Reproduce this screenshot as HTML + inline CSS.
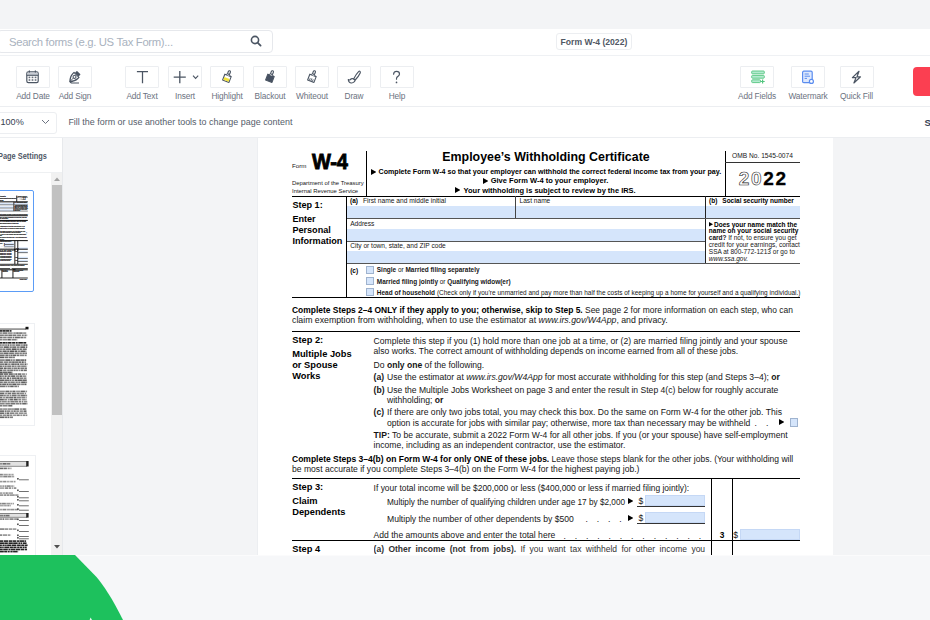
<!DOCTYPE html>
<html><head><meta charset="utf-8"><style>
html,body{margin:0;padding:0;width:930px;height:620px;overflow:hidden;background:#f3f4f6}
body{position:relative;font-family:"Liberation Sans",sans-serif}
.t{position:absolute;white-space:nowrap;line-height:1}
.r{position:absolute}
.thumb .t{-webkit-text-stroke:1.2px #333}
</style></head><body>
<div class="r" style="left:0px;top:0px;width:930px;height:29px;background:#f3f4f6"></div>
<div class="r" style="left:0px;top:29px;width:930px;height:109px;background:#fff"></div>
<div class="r" style="left:-3px;top:29.5px;width:276px;height:23px;border:1px solid #e6e8ec;border-radius:4px;box-sizing:border-box;background:#fff"></div>
<div class="t" style="left:9px;top:36.89px;font-size:11.3px;font-weight:400;color:#a9b2be;letter-spacing:-0.33px">Search forms (e.g. US Tax Form)...</div>
<svg class="r" style="left:250px;top:35px" width="12" height="12" viewBox="0 0 12 12"><circle cx="5" cy="5" r="3.6" fill="none" stroke="#4b5563" stroke-width="1.6"/><path d="M7.6 7.6L10.6 10.6" stroke="#4b5563" stroke-width="1.8" stroke-linecap="round"/></svg>
<div class="r" style="left:555.5px;top:32.5px;width:76px;height:17px;border:1px solid #eceef1;border-radius:3px;box-sizing:border-box"></div>
<div class="t" style="left:560.6px;top:37.76px;font-size:8.6px;font-weight:700;color:#505764;">Form W-4 (2022)</div>
<div class="r" style="left:0px;top:54.8px;width:930px;height:1.0px;background:#eff1f4"></div>
<div class="r" style="left:16px;top:65.5px;width:34px;height:22px;border:1px solid #eceef1;border-radius:1px;box-sizing:border-box"></div>
<svg class="r" style="left:16px;top:65.5px" width="34" height="22" viewBox="0 0 34 22"><rect x="10.8" y="5.9" width="11.4" height="10.8" rx="1.6" fill="#fff" stroke="#4b5563" stroke-width="1.2"/><rect x="11.4" y="6.5" width="10.2" height="2.6" fill="#c9cdd5"/><path d="M10.8 9.3H22.2" stroke="#4b5563" stroke-width="1.1"/><path d="M13.4 4.6V6.6M19.4 4.6V6.6" stroke="#4b5563" stroke-width="1.2"/><g fill="#4b5563" fill-opacity="0.85"><rect x="12.6" y="10.6" width="1.7" height="1.6"/><rect x="15.65" y="10.6" width="1.7" height="1.6"/><rect x="18.7" y="10.6" width="1.7" height="1.6"/><rect x="12.6" y="13.2" width="1.7" height="1.6"/><rect x="15.65" y="13.2" width="1.7" height="1.6"/><rect x="18.7" y="13.2" width="1.7" height="1.6"/></g></svg>
<div class="t" style="left:33px;top:92.10px;font-size:8.3px;font-weight:400;color:#6b7280;transform:translateX(-50%);letter-spacing:-0.12px">Add Date</div>
<div class="r" style="left:58px;top:65.5px;width:34px;height:22px;border:1px solid #eceef1;border-radius:1px;box-sizing:border-box"></div>
<svg class="r" style="left:58px;top:65.5px" width="34" height="22" viewBox="0 0 34 22"><g transform="rotate(45 16.8 10.6)"><path d="M13.3 8.2H20.3V10.2C20.3 13 18.6 15.6 16.8 17.6C15 15.6 13.3 13 13.3 10.2Z" fill="#fff" stroke="#4b5563" stroke-width="1.2" stroke-linejoin="round"/><rect x="14.2" y="5" width="5.2" height="2.8" rx="0.6" fill="#4b5563"/><circle cx="16.8" cy="11" r="1.5" fill="none" stroke="#4b5563" stroke-width="1"/><path d="M16.8 12.5V17" stroke="#4b5563" stroke-width="0.9"/></g><path d="M12.2 15.2C12.2 16.6 13 17 14.5 17H21" fill="none" stroke="#4b5563" stroke-width="1.2"/></svg>
<div class="t" style="left:75px;top:92.10px;font-size:8.3px;font-weight:400;color:#6b7280;transform:translateX(-50%);letter-spacing:-0.12px">Add Sign</div>
<div class="r" style="left:125px;top:65.5px;width:34px;height:22px;border:1px solid #eceef1;border-radius:1px;box-sizing:border-box"></div>
<svg class="r" style="left:125px;top:65.5px" width="34" height="22" viewBox="0 0 34 22"><path d="M11.9 5.6H23M17.5 5.6V17.2" stroke="#4b5563" stroke-width="1.25" fill="none"/></svg>
<div class="t" style="left:142px;top:92.10px;font-size:8.3px;font-weight:400;color:#6b7280;transform:translateX(-50%);letter-spacing:-0.12px">Add Text</div>
<div class="r" style="left:168px;top:65.5px;width:34px;height:22px;border:1px solid #eceef1;border-radius:1px;box-sizing:border-box"></div>
<svg class="r" style="left:168px;top:65.5px" width="34" height="22" viewBox="0 0 34 22"><path d="M5.7 11.1H17.8M11.8 5.1V17.2" stroke="#4b5563" stroke-width="1.3" fill="none"/><path d="M25 9.7L27.6 12.4L30.2 9.7" stroke="#4b5563" stroke-width="1.1" fill="none"/></svg>
<div class="t" style="left:185px;top:92.10px;font-size:8.3px;font-weight:400;color:#6b7280;transform:translateX(-50%);letter-spacing:-0.12px">Insert</div>
<div class="r" style="left:210px;top:65.5px;width:34px;height:22px;border:1px solid #eceef1;border-radius:1px;box-sizing:border-box"></div>
<svg class="r" style="left:210px;top:65.5px" width="34" height="22" viewBox="0 0 34 22"><g transform="rotate(21 17 12)"><path d="M13.6 9.2H20.4V15.4H13.6Z" fill="#fff" stroke="#4b5563" stroke-width="1.1" stroke-linejoin="round"/><rect x="14.2" y="12.0" width="5.6" height="2.9" fill="#f2e33b"/><path d="M15 9.2L16 7.6H18L19 9.2" fill="#fff" stroke="#4b5563" stroke-width="1" stroke-linejoin="round"/><rect x="15.9" y="4.3" width="2.2" height="3.6" rx="1.1" fill="#fff" stroke="#4b5563" stroke-width="1.1"/></g></svg>
<div class="t" style="left:227px;top:92.10px;font-size:8.3px;font-weight:400;color:#6b7280;transform:translateX(-50%);letter-spacing:-0.12px">Highlight</div>
<div class="r" style="left:253px;top:65.5px;width:34px;height:22px;border:1px solid #eceef1;border-radius:1px;box-sizing:border-box"></div>
<svg class="r" style="left:253px;top:65.5px" width="34" height="22" viewBox="0 0 34 22"><g transform="rotate(21 17 12)"><path d="M13.6 9.2H20.4V15.4H13.6Z" fill="#465162" stroke="#4b5563" stroke-width="1.1" stroke-linejoin="round"/><path d="M15 9.2L16 7.6H18L19 9.2" fill="#fff" stroke="#4b5563" stroke-width="1" stroke-linejoin="round"/><rect x="15.9" y="4.3" width="2.2" height="3.6" rx="1.1" fill="#fff" stroke="#4b5563" stroke-width="1.1"/></g></svg>
<div class="t" style="left:270px;top:92.10px;font-size:8.3px;font-weight:400;color:#6b7280;transform:translateX(-50%);letter-spacing:-0.12px">Blackout</div>
<div class="r" style="left:295px;top:65.5px;width:34px;height:22px;border:1px solid #eceef1;border-radius:1px;box-sizing:border-box"></div>
<svg class="r" style="left:295px;top:65.5px" width="34" height="22" viewBox="0 0 34 22"><g transform="rotate(21 17 12)"><path d="M13.6 9.2H20.4V15.4H13.6Z" fill="#fff" stroke="#4b5563" stroke-width="1.1" stroke-linejoin="round"/><path d="M15.4 12.8V15.2M17 12.4V15.2M18.6 12.8V15.2" stroke="#4b5563" stroke-width="0.8"/><path d="M15 9.2L16 7.6H18L19 9.2" fill="#fff" stroke="#4b5563" stroke-width="1" stroke-linejoin="round"/><rect x="15.9" y="4.3" width="2.2" height="3.6" rx="1.1" fill="#fff" stroke="#4b5563" stroke-width="1.1"/></g></svg>
<div class="t" style="left:312px;top:92.10px;font-size:8.3px;font-weight:400;color:#6b7280;transform:translateX(-50%);letter-spacing:-0.12px">Whiteout</div>
<div class="r" style="left:337px;top:65.5px;width:34px;height:22px;border:1px solid #eceef1;border-radius:1px;box-sizing:border-box"></div>
<svg class="r" style="left:337px;top:65.5px" width="34" height="22" viewBox="0 0 34 22"><path d="M16.6 12.9C18 10.2 20.4 6.8 21.6 5.6C22.6 4.7 23.8 5.5 23.2 6.9C22.3 9 19.8 12.2 18.2 14Z" fill="none" stroke="#4b5563" stroke-width="1.15" stroke-linejoin="round"/><path d="M16.4 12.7C14.8 12.3 13.5 13.2 13 13.8C12.6 14.2 11.8 13.9 11.3 13.6C11.4 15.6 12.8 17.2 14.6 17C16.6 16.8 18.2 15.2 18 14Z" fill="none" stroke="#4b5563" stroke-width="1.15" stroke-linejoin="round"/></svg>
<div class="t" style="left:354px;top:92.10px;font-size:8.3px;font-weight:400;color:#6b7280;transform:translateX(-50%);letter-spacing:-0.12px">Draw</div>
<div class="r" style="left:380px;top:65.5px;width:34px;height:22px;border:1px solid #eceef1;border-radius:1px;box-sizing:border-box"></div>
<svg class="r" style="left:380px;top:65.5px" width="34" height="22" viewBox="0 0 34 22"><path d="M13.6 8.2C13.6 6.3 15 5.3 16.5 5.3C18.2 5.3 19.5 6.4 19.5 8C19.5 9.8 17.7 10.4 16.8 11.5C16.5 11.9 16.5 12.4 16.5 13.2" fill="none" stroke="#4b5563" stroke-width="1.2" stroke-linecap="round"/><circle cx="16.5" cy="16.4" r="0.85" fill="#4b5563"/></svg>
<div class="t" style="left:397px;top:92.10px;font-size:8.3px;font-weight:400;color:#6b7280;transform:translateX(-50%);letter-spacing:-0.12px">Help</div>
<div class="r" style="left:740px;top:65.5px;width:34px;height:22px;border:1px solid #eceef1;border-radius:1px;box-sizing:border-box"></div>
<svg class="r" style="left:740px;top:65.5px" width="34" height="22" viewBox="0 0 34 22"><g fill="#b4ead0" stroke="#52c57f" stroke-width="0.9"><rect x="11.7" y="5" width="12.6" height="2.8" rx="0.8"/><rect x="11.7" y="9.4" width="12.6" height="2.8" rx="0.8"/><rect x="11.7" y="13.8" width="8.8" height="2.8" rx="0.8"/></g><path d="M22.6 13.4V17.6M20.5 15.5H24.7" stroke="#52c57f" stroke-width="1.2"/></svg>
<div class="t" style="left:757px;top:92.10px;font-size:8.3px;font-weight:400;color:#6b7280;transform:translateX(-50%);letter-spacing:-0.12px">Add Fields</div>
<div class="r" style="left:791px;top:65.5px;width:34px;height:22px;border:1px solid #eceef1;border-radius:1px;box-sizing:border-box"></div>
<svg class="r" style="left:791px;top:65.5px" width="34" height="22" viewBox="0 0 34 22"><rect x="11.6" y="5.2" width="9.6" height="11.4" rx="1.2" fill="#dfe9fd" stroke="#5b8def" stroke-width="1.2"/><path d="M13.6 8H17.8M13.6 10.2H19M13.6 12.4H16" stroke="#5b8def" stroke-width="1"/><circle cx="20.4" cy="15.4" r="2" fill="#fff" stroke="#5b8def" stroke-width="1.2"/></svg>
<div class="t" style="left:808px;top:92.10px;font-size:8.3px;font-weight:400;color:#6b7280;transform:translateX(-50%);letter-spacing:-0.12px">Watermark</div>
<div class="r" style="left:839.5px;top:65.5px;width:34px;height:22px;border:1px solid #eceef1;border-radius:1px;box-sizing:border-box"></div>
<svg class="r" style="left:839.5px;top:65.5px" width="34" height="22" viewBox="0 0 34 22"><path d="M19 5.3L12.4 11.6H16L13.9 17L20.5 10.8H17Z" fill="none" stroke="#4b5563" stroke-width="1.2" stroke-linejoin="round"/></svg>
<div class="t" style="left:856.5px;top:92.10px;font-size:8.3px;font-weight:400;color:#6b7280;transform:translateX(-50%);letter-spacing:-0.12px">Quick Fill</div>
<div class="r" style="left:913px;top:67px;width:30px;height:28.5px;background:#fb3f51;border-radius:4px"></div>
<div class="r" style="left:0px;top:106.0px;width:930px;height:1.0px;background:#eceef1"></div>
<div class="r" style="left:-4px;top:112px;width:61px;height:21.5px;border:1px solid #eceef1;border-radius:3px;box-sizing:border-box"></div>
<div class="t" style="left:0.5px;top:118.22px;font-size:9.1px;font-weight:400;color:#374151;">100%</div>
<svg class="r" style="left:41px;top:119px" width="9" height="6" viewBox="0 0 9 6"><path d="M1 1L4.5 4.5L8 1" fill="none" stroke="#6b7280" stroke-width="1"/></svg>
<div class="t" style="left:68.4px;top:118.29px;font-size:8.95px;font-weight:400;color:#555d6a;">Fill the form or use another tools to change page content</div>
<div class="t" style="left:924.5px;top:117.83px;font-size:9.5px;font-weight:700;color:#374151;">S</div>
<div class="r" style="left:0px;top:137.1px;width:930px;height:1.0px;background:#eceef1"></div>
<div class="r" style="left:0px;top:138px;width:930px;height:417px;background:#f3f4f6"></div>
<div class="r" style="left:0px;top:138px;width:62px;height:417px;background:#fff"></div>
<div class="r" style="left:61.8px;top:138px;width:1.0px;height:417px;background:#e7e9ec"></div>
<div class="t" style="left:-2px;top:152.06px;font-size:8.6px;font-weight:700;color:#4f5866;transform:scaleX(0.86);transform-origin:0 0">Page Settings</div>
<div class="r" style="left:0px;top:171.8px;width:62px;height:1.0px;background:#eef0f2"></div>
<div class="r" style="left:50.5px;top:172.8px;width:11.5px;height:382px;background:#f1f1f1"></div>
<div class="r" style="left:52px;top:184.5px;width:9.5px;height:230px;background:#c1c1c1"></div>
<svg class="r" style="left:53.5px;top:176.5px" width="6" height="4" viewBox="0 0 6 4"><path d="M0 4L3 0.5L6 4Z" fill="#a3a3a3"/></svg>
<svg class="r" style="left:53.5px;top:545px" width="6" height="4" viewBox="0 0 6 4"><path d="M0 0L3 3.5L6 0Z" fill="#505050"/></svg>
<div class="r" style="left:-10px;top:322.5px;width:44.5px;height:103px;border:1px solid #eef0f3;box-sizing:border-box;background:#fff"></div>
<div class="r" style="left:-10px;top:455px;width:45.5px;height:110px;border:1px solid #eef0f3;box-sizing:border-box;background:#fff"></div>
<svg class="r" style="left:0;top:0" width="34" height="430" viewBox="0 0 34 430"><rect x="0" y="328.6" width="26" height="0.9" fill="#333"/><rect x="25.5" y="326.8" width="3" height="2.6" fill="#111"/><rect x="0.00" y="330.10" width="2.03" height="1.6" fill="#222" fill-opacity="1.00"/><rect x="2.36" y="330.10" width="3.38" height="1.6" fill="#222" fill-opacity="1.00"/><rect x="6.06" y="330.10" width="3.28" height="1.6" fill="#222" fill-opacity="0.98"/><rect x="9.81" y="330.10" width="1.71" height="1.6" fill="#222" fill-opacity="1.00"/><rect x="0.00" y="332.30" width="1.93" height="1.6" fill="#222" fill-opacity="0.54"/><rect x="2.48" y="332.30" width="4.82" height="1.6" fill="#222" fill-opacity="0.62"/><rect x="7.76" y="332.30" width="4.92" height="1.6" fill="#222" fill-opacity="0.51"/><rect x="13.32" y="332.30" width="2.51" height="1.6" fill="#222" fill-opacity="0.53"/><rect x="16.18" y="332.30" width="2.58" height="1.6" fill="#222" fill-opacity="0.67"/><rect x="19.13" y="332.30" width="3.54" height="1.6" fill="#222" fill-opacity="0.63"/><rect x="23.12" y="332.30" width="3.14" height="1.6" fill="#222" fill-opacity="0.51"/><rect x="0.00" y="334.50" width="3.88" height="1.6" fill="#222" fill-opacity="0.59"/><rect x="4.31" y="334.50" width="3.55" height="1.6" fill="#222" fill-opacity="0.59"/><rect x="8.28" y="334.50" width="4.28" height="1.6" fill="#222" fill-opacity="0.65"/><rect x="12.95" y="334.50" width="3.51" height="1.6" fill="#222" fill-opacity="0.61"/><rect x="17.11" y="334.50" width="4.05" height="1.6" fill="#222" fill-opacity="0.56"/><rect x="21.86" y="334.50" width="1.91" height="1.6" fill="#222" fill-opacity="0.59"/><rect x="24.38" y="334.50" width="2.03" height="1.6" fill="#222" fill-opacity="0.60"/><rect x="26.72" y="334.50" width="0.47" height="1.6" fill="#222" fill-opacity="0.66"/><rect x="0.00" y="336.70" width="2.60" height="1.6" fill="#222" fill-opacity="0.65"/><rect x="3.14" y="336.70" width="3.53" height="1.6" fill="#222" fill-opacity="0.59"/><rect x="7.30" y="336.70" width="4.81" height="1.6" fill="#222" fill-opacity="0.60"/><rect x="12.67" y="336.70" width="1.71" height="1.6" fill="#222" fill-opacity="0.65"/><rect x="14.94" y="336.70" width="4.98" height="1.6" fill="#222" fill-opacity="0.67"/><rect x="20.33" y="336.70" width="2.85" height="1.6" fill="#222" fill-opacity="0.64"/><rect x="23.49" y="336.70" width="2.69" height="1.6" fill="#222" fill-opacity="0.53"/><rect x="0.00" y="338.90" width="1.95" height="1.6" fill="#222" fill-opacity="0.55"/><rect x="2.41" y="338.90" width="4.55" height="1.6" fill="#222" fill-opacity="0.51"/><rect x="7.44" y="338.90" width="3.42" height="1.6" fill="#222" fill-opacity="0.69"/><rect x="11.49" y="338.90" width="4.52" height="1.6" fill="#222" fill-opacity="0.56"/><rect x="16.48" y="338.90" width="0.74" height="1.6" fill="#222" fill-opacity="0.69"/><rect x="0.00" y="342.00" width="2.12" height="1.6" fill="#222" fill-opacity="1.00"/><rect x="2.51" y="342.00" width="3.20" height="1.6" fill="#222" fill-opacity="1.00"/><rect x="6.11" y="342.00" width="1.51" height="1.6" fill="#222" fill-opacity="1.00"/><rect x="8.07" y="342.00" width="3.48" height="1.6" fill="#222" fill-opacity="1.00"/><rect x="12.13" y="342.00" width="3.30" height="1.6" fill="#222" fill-opacity="1.00"/><rect x="16.01" y="342.00" width="1.69" height="1.6" fill="#222" fill-opacity="1.00"/><rect x="18.31" y="342.00" width="4.56" height="1.6" fill="#222" fill-opacity="1.00"/><rect x="23.33" y="342.00" width="2.90" height="1.6" fill="#222" fill-opacity="1.00"/><rect x="0.00" y="344.30" width="1.74" height="1.6" fill="#222" fill-opacity="0.58"/><rect x="2.10" y="344.30" width="2.69" height="1.6" fill="#222" fill-opacity="0.54"/><rect x="5.09" y="344.30" width="2.03" height="1.6" fill="#222" fill-opacity="0.55"/><rect x="7.57" y="344.30" width="1.59" height="1.6" fill="#222" fill-opacity="0.73"/><rect x="9.70" y="344.30" width="2.02" height="1.6" fill="#222" fill-opacity="0.59"/><rect x="12.16" y="344.30" width="2.77" height="1.6" fill="#222" fill-opacity="0.56"/><rect x="15.57" y="344.30" width="4.98" height="1.6" fill="#222" fill-opacity="0.64"/><rect x="21.04" y="344.30" width="1.80" height="1.6" fill="#222" fill-opacity="0.55"/><rect x="23.28" y="344.30" width="2.43" height="1.6" fill="#222" fill-opacity="0.72"/><rect x="26.07" y="344.30" width="1.33" height="1.6" fill="#222" fill-opacity="0.75"/><rect x="0.00" y="346.35" width="3.40" height="1.6" fill="#222" fill-opacity="0.53"/><rect x="3.91" y="346.35" width="4.92" height="1.6" fill="#222" fill-opacity="0.73"/><rect x="9.42" y="346.35" width="2.41" height="1.6" fill="#222" fill-opacity="0.61"/><rect x="12.20" y="346.35" width="4.20" height="1.6" fill="#222" fill-opacity="0.65"/><rect x="17.01" y="346.35" width="2.65" height="1.6" fill="#222" fill-opacity="0.58"/><rect x="20.29" y="346.35" width="4.95" height="1.6" fill="#222" fill-opacity="0.72"/><rect x="25.86" y="346.35" width="1.42" height="1.6" fill="#222" fill-opacity="0.70"/><rect x="0.00" y="348.40" width="2.74" height="1.6" fill="#222" fill-opacity="0.53"/><rect x="3.06" y="348.40" width="2.48" height="1.6" fill="#222" fill-opacity="0.59"/><rect x="6.11" y="348.40" width="4.85" height="1.6" fill="#222" fill-opacity="0.63"/><rect x="11.63" y="348.40" width="4.96" height="1.6" fill="#222" fill-opacity="0.75"/><rect x="17.04" y="348.40" width="2.27" height="1.6" fill="#222" fill-opacity="0.58"/><rect x="19.69" y="348.40" width="2.22" height="1.6" fill="#222" fill-opacity="0.67"/><rect x="22.56" y="348.40" width="4.16" height="1.6" fill="#222" fill-opacity="0.64"/><rect x="0.00" y="350.45" width="1.80" height="1.6" fill="#222" fill-opacity="0.68"/><rect x="2.46" y="350.45" width="4.24" height="1.6" fill="#222" fill-opacity="0.70"/><rect x="7.19" y="350.45" width="2.12" height="1.6" fill="#222" fill-opacity="0.71"/><rect x="9.75" y="350.45" width="4.30" height="1.6" fill="#222" fill-opacity="0.75"/><rect x="14.51" y="350.45" width="2.90" height="1.6" fill="#222" fill-opacity="0.75"/><rect x="18.00" y="350.45" width="2.10" height="1.6" fill="#222" fill-opacity="0.56"/><rect x="20.46" y="350.45" width="4.67" height="1.6" fill="#222" fill-opacity="0.71"/><rect x="25.48" y="350.45" width="0.82" height="1.6" fill="#222" fill-opacity="0.75"/><rect x="0.00" y="352.50" width="3.42" height="1.6" fill="#222" fill-opacity="0.56"/><rect x="3.73" y="352.50" width="4.90" height="1.6" fill="#222" fill-opacity="0.68"/><rect x="9.13" y="352.50" width="4.77" height="1.6" fill="#222" fill-opacity="0.63"/><rect x="14.55" y="352.50" width="4.39" height="1.6" fill="#222" fill-opacity="0.58"/><rect x="19.34" y="352.50" width="2.53" height="1.6" fill="#222" fill-opacity="0.58"/><rect x="22.40" y="352.50" width="2.41" height="1.6" fill="#222" fill-opacity="0.62"/><rect x="25.16" y="352.50" width="1.81" height="1.6" fill="#222" fill-opacity="0.61"/><rect x="0.00" y="354.55" width="4.67" height="1.6" fill="#222" fill-opacity="0.63"/><rect x="5.33" y="354.55" width="3.26" height="1.6" fill="#222" fill-opacity="0.65"/><rect x="9.10" y="354.55" width="1.57" height="1.6" fill="#222" fill-opacity="0.63"/><rect x="11.04" y="354.55" width="1.51" height="1.6" fill="#222" fill-opacity="0.71"/><rect x="12.92" y="354.55" width="3.16" height="1.6" fill="#222" fill-opacity="0.70"/><rect x="16.60" y="354.55" width="2.64" height="1.6" fill="#222" fill-opacity="0.65"/><rect x="19.76" y="354.55" width="4.24" height="1.6" fill="#222" fill-opacity="0.55"/><rect x="24.53" y="354.55" width="2.09" height="1.6" fill="#222" fill-opacity="0.59"/><rect x="0.00" y="356.60" width="4.16" height="1.6" fill="#222" fill-opacity="0.74"/><rect x="4.64" y="356.60" width="3.64" height="1.6" fill="#222" fill-opacity="0.64"/><rect x="8.79" y="356.60" width="3.92" height="1.6" fill="#222" fill-opacity="0.63"/><rect x="13.22" y="356.60" width="1.52" height="1.6" fill="#222" fill-opacity="0.75"/><rect x="0.00" y="359.30" width="4.80" height="1.6" fill="#222" fill-opacity="0.59"/><rect x="5.32" y="359.30" width="4.80" height="1.6" fill="#222" fill-opacity="0.72"/><rect x="10.48" y="359.30" width="1.93" height="1.6" fill="#222" fill-opacity="0.63"/><rect x="12.73" y="359.30" width="2.34" height="1.6" fill="#222" fill-opacity="0.54"/><rect x="15.64" y="359.30" width="4.24" height="1.6" fill="#222" fill-opacity="0.74"/><rect x="20.25" y="359.30" width="4.01" height="1.6" fill="#222" fill-opacity="0.68"/><rect x="24.61" y="359.30" width="1.57" height="1.6" fill="#222" fill-opacity="0.75"/><rect x="0.00" y="361.35" width="2.89" height="1.6" fill="#222" fill-opacity="0.64"/><rect x="3.59" y="361.35" width="4.41" height="1.6" fill="#222" fill-opacity="0.57"/><rect x="8.48" y="361.35" width="3.30" height="1.6" fill="#222" fill-opacity="0.61"/><rect x="12.16" y="361.35" width="2.61" height="1.6" fill="#222" fill-opacity="0.69"/><rect x="15.08" y="361.35" width="3.44" height="1.6" fill="#222" fill-opacity="0.63"/><rect x="18.83" y="361.35" width="2.66" height="1.6" fill="#222" fill-opacity="0.67"/><rect x="21.99" y="361.35" width="1.73" height="1.6" fill="#222" fill-opacity="0.76"/><rect x="24.33" y="361.35" width="1.74" height="1.6" fill="#222" fill-opacity="0.55"/><rect x="0.00" y="363.40" width="4.23" height="1.6" fill="#222" fill-opacity="0.59"/><rect x="4.58" y="363.40" width="2.98" height="1.6" fill="#222" fill-opacity="0.74"/><rect x="8.18" y="363.40" width="2.41" height="1.6" fill="#222" fill-opacity="0.56"/><rect x="11.26" y="363.40" width="3.50" height="1.6" fill="#222" fill-opacity="0.69"/><rect x="15.09" y="363.40" width="1.70" height="1.6" fill="#222" fill-opacity="0.69"/><rect x="17.26" y="363.40" width="1.75" height="1.6" fill="#222" fill-opacity="0.74"/><rect x="19.57" y="363.40" width="4.31" height="1.6" fill="#222" fill-opacity="0.55"/><rect x="24.52" y="363.40" width="1.73" height="1.6" fill="#222" fill-opacity="0.73"/><rect x="26.73" y="363.40" width="0.71" height="1.6" fill="#222" fill-opacity="0.66"/><rect x="0.00" y="365.45" width="1.95" height="1.6" fill="#222" fill-opacity="0.65"/><rect x="2.35" y="365.45" width="1.88" height="1.6" fill="#222" fill-opacity="0.57"/><rect x="4.55" y="365.45" width="2.21" height="1.6" fill="#222" fill-opacity="0.60"/><rect x="7.18" y="365.45" width="4.16" height="1.6" fill="#222" fill-opacity="0.59"/><rect x="11.84" y="365.45" width="2.12" height="1.6" fill="#222" fill-opacity="0.61"/><rect x="14.27" y="365.45" width="2.38" height="1.6" fill="#222" fill-opacity="0.53"/><rect x="17.24" y="365.45" width="3.43" height="1.6" fill="#222" fill-opacity="0.57"/><rect x="21.16" y="365.45" width="4.77" height="1.6" fill="#222" fill-opacity="0.55"/><rect x="26.55" y="365.45" width="0.54" height="1.6" fill="#222" fill-opacity="0.64"/><rect x="0.00" y="367.50" width="3.27" height="1.6" fill="#222" fill-opacity="0.69"/><rect x="3.97" y="367.50" width="2.70" height="1.6" fill="#222" fill-opacity="0.72"/><rect x="7.25" y="367.50" width="3.73" height="1.6" fill="#222" fill-opacity="0.62"/><rect x="11.41" y="367.50" width="1.69" height="1.6" fill="#222" fill-opacity="0.56"/><rect x="13.43" y="367.50" width="4.09" height="1.6" fill="#222" fill-opacity="0.59"/><rect x="17.89" y="367.50" width="1.80" height="1.6" fill="#222" fill-opacity="0.72"/><rect x="20.33" y="367.50" width="3.85" height="1.6" fill="#222" fill-opacity="0.59"/><rect x="24.58" y="367.50" width="2.33" height="1.6" fill="#222" fill-opacity="0.63"/><rect x="0.00" y="369.55" width="2.42" height="1.6" fill="#222" fill-opacity="0.75"/><rect x="3.11" y="369.55" width="3.41" height="1.6" fill="#222" fill-opacity="0.58"/><rect x="7.21" y="369.55" width="2.58" height="1.6" fill="#222" fill-opacity="0.61"/><rect x="10.10" y="369.55" width="2.84" height="1.6" fill="#222" fill-opacity="0.64"/><rect x="13.43" y="369.55" width="2.20" height="1.6" fill="#222" fill-opacity="0.64"/><rect x="15.94" y="369.55" width="2.42" height="1.6" fill="#222" fill-opacity="0.55"/><rect x="18.82" y="369.55" width="1.65" height="1.6" fill="#222" fill-opacity="0.53"/><rect x="20.89" y="369.55" width="2.31" height="1.6" fill="#222" fill-opacity="0.66"/><rect x="23.72" y="369.55" width="3.12" height="1.6" fill="#222" fill-opacity="0.68"/><rect x="0.00" y="371.60" width="2.64" height="1.6" fill="#222" fill-opacity="0.76"/><rect x="3.00" y="371.60" width="4.03" height="1.6" fill="#222" fill-opacity="0.68"/><rect x="7.35" y="371.60" width="4.42" height="1.6" fill="#222" fill-opacity="0.73"/><rect x="12.33" y="371.60" width="0.35" height="1.6" fill="#222" fill-opacity="0.72"/><rect x="0.00" y="373.30" width="3.27" height="1.6" fill="#222" fill-opacity="0.72"/><rect x="3.89" y="373.30" width="4.39" height="1.6" fill="#222" fill-opacity="0.66"/><rect x="8.94" y="373.30" width="3.89" height="1.6" fill="#222" fill-opacity="0.69"/><rect x="13.22" y="373.30" width="1.61" height="1.6" fill="#222" fill-opacity="0.56"/><rect x="15.27" y="373.30" width="1.87" height="1.6" fill="#222" fill-opacity="0.72"/><rect x="17.66" y="373.30" width="3.70" height="1.6" fill="#222" fill-opacity="0.67"/><rect x="21.93" y="373.30" width="3.21" height="1.6" fill="#222" fill-opacity="0.53"/><rect x="25.76" y="373.30" width="0.95" height="1.6" fill="#222" fill-opacity="0.64"/><rect x="0.00" y="375.35" width="1.73" height="1.6" fill="#222" fill-opacity="0.70"/><rect x="2.13" y="375.35" width="1.76" height="1.6" fill="#222" fill-opacity="0.59"/><rect x="4.48" y="375.35" width="2.22" height="1.6" fill="#222" fill-opacity="0.70"/><rect x="7.39" y="375.35" width="3.23" height="1.6" fill="#222" fill-opacity="0.62"/><rect x="11.11" y="375.35" width="3.89" height="1.6" fill="#222" fill-opacity="0.71"/><rect x="15.55" y="375.35" width="3.75" height="1.6" fill="#222" fill-opacity="0.55"/><rect x="19.66" y="375.35" width="2.39" height="1.6" fill="#222" fill-opacity="0.70"/><rect x="22.47" y="375.35" width="3.49" height="1.6" fill="#222" fill-opacity="0.53"/><rect x="26.28" y="375.35" width="0.23" height="1.6" fill="#222" fill-opacity="0.68"/><rect x="0.00" y="377.40" width="2.52" height="1.6" fill="#222" fill-opacity="0.65"/><rect x="3.00" y="377.40" width="3.13" height="1.6" fill="#222" fill-opacity="0.56"/><rect x="6.79" y="377.40" width="2.20" height="1.6" fill="#222" fill-opacity="0.75"/><rect x="9.67" y="377.40" width="1.56" height="1.6" fill="#222" fill-opacity="0.63"/><rect x="11.85" y="377.40" width="4.89" height="1.6" fill="#222" fill-opacity="0.63"/><rect x="17.15" y="377.40" width="2.23" height="1.6" fill="#222" fill-opacity="0.75"/><rect x="19.77" y="377.40" width="3.54" height="1.6" fill="#222" fill-opacity="0.56"/><rect x="23.81" y="377.40" width="2.67" height="1.6" fill="#222" fill-opacity="0.56"/><rect x="0.00" y="379.45" width="4.60" height="1.6" fill="#222" fill-opacity="0.69"/><rect x="5.00" y="379.45" width="4.64" height="1.6" fill="#222" fill-opacity="0.64"/><rect x="9.95" y="379.45" width="1.51" height="1.6" fill="#222" fill-opacity="0.64"/><rect x="11.94" y="379.45" width="2.56" height="1.6" fill="#222" fill-opacity="0.56"/><rect x="14.94" y="379.45" width="2.61" height="1.6" fill="#222" fill-opacity="0.72"/><rect x="17.84" y="379.45" width="4.13" height="1.6" fill="#222" fill-opacity="0.72"/><rect x="22.32" y="379.45" width="4.42" height="1.6" fill="#222" fill-opacity="0.69"/><rect x="0.00" y="381.50" width="2.80" height="1.6" fill="#222" fill-opacity="0.62"/><rect x="3.50" y="381.50" width="3.56" height="1.6" fill="#222" fill-opacity="0.61"/><rect x="7.54" y="381.50" width="2.46" height="1.6" fill="#222" fill-opacity="0.54"/><rect x="10.34" y="381.50" width="4.42" height="1.6" fill="#222" fill-opacity="0.59"/><rect x="15.43" y="381.50" width="2.37" height="1.6" fill="#222" fill-opacity="0.59"/><rect x="18.31" y="381.50" width="2.16" height="1.6" fill="#222" fill-opacity="0.61"/><rect x="21.16" y="381.50" width="4.59" height="1.6" fill="#222" fill-opacity="0.72"/><rect x="26.31" y="381.50" width="0.76" height="1.6" fill="#222" fill-opacity="0.75"/><rect x="0.00" y="383.55" width="1.67" height="1.6" fill="#222" fill-opacity="0.70"/><rect x="2.15" y="383.55" width="4.13" height="1.6" fill="#222" fill-opacity="0.68"/><rect x="6.70" y="383.55" width="1.67" height="1.6" fill="#222" fill-opacity="0.74"/><rect x="8.72" y="383.55" width="3.15" height="1.6" fill="#222" fill-opacity="0.61"/><rect x="12.30" y="383.55" width="4.09" height="1.6" fill="#222" fill-opacity="0.75"/><rect x="16.79" y="383.55" width="3.80" height="1.6" fill="#222" fill-opacity="0.60"/><rect x="21.11" y="383.55" width="2.88" height="1.6" fill="#222" fill-opacity="0.57"/><rect x="24.35" y="383.55" width="2.07" height="1.6" fill="#222" fill-opacity="0.74"/><rect x="0.00" y="385.60" width="4.99" height="1.6" fill="#222" fill-opacity="0.63"/><rect x="5.34" y="385.60" width="2.17" height="1.6" fill="#222" fill-opacity="0.55"/><rect x="7.95" y="385.60" width="1.82" height="1.6" fill="#222" fill-opacity="0.58"/><rect x="10.18" y="385.60" width="3.49" height="1.6" fill="#222" fill-opacity="0.73"/><rect x="14.27" y="385.60" width="2.94" height="1.6" fill="#222" fill-opacity="0.62"/><rect x="17.72" y="385.60" width="1.15" height="1.6" fill="#222" fill-opacity="0.61"/><rect x="0.00" y="390.60" width="4.89" height="1.6" fill="#222" fill-opacity="0.52"/><rect x="5.39" y="390.60" width="3.70" height="1.6" fill="#222" fill-opacity="0.68"/><rect x="9.48" y="390.60" width="2.45" height="1.6" fill="#222" fill-opacity="0.55"/><rect x="12.39" y="390.60" width="3.06" height="1.6" fill="#222" fill-opacity="0.70"/><rect x="16.09" y="390.60" width="4.56" height="1.6" fill="#222" fill-opacity="0.50"/><rect x="20.95" y="390.60" width="3.98" height="1.6" fill="#222" fill-opacity="0.69"/><rect x="25.43" y="390.60" width="1.66" height="1.6" fill="#222" fill-opacity="0.50"/><rect x="0.00" y="392.65" width="4.39" height="1.6" fill="#222" fill-opacity="0.68"/><rect x="5.08" y="392.65" width="2.37" height="1.6" fill="#222" fill-opacity="0.52"/><rect x="7.81" y="392.65" width="3.33" height="1.6" fill="#222" fill-opacity="0.64"/><rect x="11.81" y="392.65" width="4.03" height="1.6" fill="#222" fill-opacity="0.64"/><rect x="16.45" y="392.65" width="3.10" height="1.6" fill="#222" fill-opacity="0.62"/><rect x="19.86" y="392.65" width="4.24" height="1.6" fill="#222" fill-opacity="0.55"/><rect x="24.77" y="392.65" width="1.34" height="1.6" fill="#222" fill-opacity="0.56"/><rect x="0.00" y="394.70" width="3.73" height="1.6" fill="#222" fill-opacity="0.65"/><rect x="4.07" y="394.70" width="1.75" height="1.6" fill="#222" fill-opacity="0.61"/><rect x="6.35" y="394.70" width="2.86" height="1.6" fill="#222" fill-opacity="0.54"/><rect x="9.75" y="394.70" width="1.54" height="1.6" fill="#222" fill-opacity="0.56"/><rect x="11.77" y="394.70" width="4.86" height="1.6" fill="#222" fill-opacity="0.64"/><rect x="17.28" y="394.70" width="3.16" height="1.6" fill="#222" fill-opacity="0.55"/><rect x="20.84" y="394.70" width="4.86" height="1.6" fill="#222" fill-opacity="0.65"/><rect x="26.13" y="394.70" width="0.99" height="1.6" fill="#222" fill-opacity="0.60"/><rect x="0.00" y="396.75" width="2.40" height="1.6" fill="#222" fill-opacity="0.64"/><rect x="3.07" y="396.75" width="2.29" height="1.6" fill="#222" fill-opacity="0.50"/><rect x="5.80" y="396.75" width="2.97" height="1.6" fill="#222" fill-opacity="0.64"/><rect x="9.15" y="396.75" width="4.29" height="1.6" fill="#222" fill-opacity="0.66"/><rect x="13.94" y="396.75" width="2.22" height="1.6" fill="#222" fill-opacity="0.71"/><rect x="16.59" y="396.75" width="4.37" height="1.6" fill="#222" fill-opacity="0.55"/><rect x="21.34" y="396.75" width="4.16" height="1.6" fill="#222" fill-opacity="0.56"/><rect x="26.19" y="396.75" width="0.68" height="1.6" fill="#222" fill-opacity="0.54"/><rect x="0.00" y="398.80" width="3.83" height="1.6" fill="#222" fill-opacity="0.70"/><rect x="4.19" y="398.80" width="2.88" height="1.6" fill="#222" fill-opacity="0.54"/><rect x="7.75" y="398.80" width="2.00" height="1.6" fill="#222" fill-opacity="0.51"/><rect x="10.07" y="398.80" width="2.88" height="1.6" fill="#222" fill-opacity="0.69"/><rect x="13.60" y="398.80" width="4.06" height="1.6" fill="#222" fill-opacity="0.71"/><rect x="18.34" y="398.80" width="2.65" height="1.6" fill="#222" fill-opacity="0.54"/><rect x="21.67" y="398.80" width="4.11" height="1.6" fill="#222" fill-opacity="0.50"/><rect x="26.35" y="398.80" width="0.53" height="1.6" fill="#222" fill-opacity="0.58"/><rect x="0.00" y="400.85" width="1.51" height="1.6" fill="#222" fill-opacity="0.56"/><rect x="1.95" y="400.85" width="4.84" height="1.6" fill="#222" fill-opacity="0.52"/><rect x="7.48" y="400.85" width="2.23" height="1.6" fill="#222" fill-opacity="0.57"/><rect x="10.34" y="400.85" width="4.38" height="1.6" fill="#222" fill-opacity="0.59"/><rect x="15.03" y="400.85" width="3.16" height="1.6" fill="#222" fill-opacity="0.58"/><rect x="18.86" y="400.85" width="2.18" height="1.6" fill="#222" fill-opacity="0.58"/><rect x="21.69" y="400.85" width="1.61" height="1.6" fill="#222" fill-opacity="0.59"/><rect x="23.92" y="400.85" width="3.32" height="1.6" fill="#222" fill-opacity="0.50"/><rect x="0.00" y="402.90" width="4.72" height="1.6" fill="#222" fill-opacity="0.55"/><rect x="5.32" y="402.90" width="4.64" height="1.6" fill="#222" fill-opacity="0.57"/><rect x="10.37" y="402.90" width="4.85" height="1.6" fill="#222" fill-opacity="0.63"/><rect x="15.63" y="402.90" width="4.01" height="1.6" fill="#222" fill-opacity="0.56"/><rect x="20.05" y="402.90" width="1.51" height="1.6" fill="#222" fill-opacity="0.66"/><rect x="22.23" y="402.90" width="3.72" height="1.6" fill="#222" fill-opacity="0.70"/><rect x="26.26" y="402.90" width="1.15" height="1.6" fill="#222" fill-opacity="0.60"/><rect x="0.00" y="404.95" width="2.38" height="1.6" fill="#222" fill-opacity="0.59"/><rect x="2.88" y="404.95" width="4.75" height="1.6" fill="#222" fill-opacity="0.54"/><rect x="8.25" y="404.95" width="4.08" height="1.6" fill="#222" fill-opacity="0.67"/><rect x="0.00" y="408.30" width="2.65" height="1.6" fill="#222" fill-opacity="0.55"/><rect x="3.09" y="408.30" width="4.24" height="1.6" fill="#222" fill-opacity="0.50"/><rect x="7.71" y="408.30" width="4.14" height="1.6" fill="#222" fill-opacity="0.53"/><rect x="12.17" y="408.30" width="1.62" height="1.6" fill="#222" fill-opacity="0.60"/><rect x="14.22" y="408.30" width="4.93" height="1.6" fill="#222" fill-opacity="0.67"/><rect x="19.84" y="408.30" width="2.43" height="1.6" fill="#222" fill-opacity="0.50"/><rect x="22.61" y="408.30" width="3.24" height="1.6" fill="#222" fill-opacity="0.63"/><rect x="26.33" y="408.30" width="0.26" height="1.6" fill="#222" fill-opacity="0.57"/><rect x="0.00" y="410.35" width="4.12" height="1.6" fill="#222" fill-opacity="0.66"/><rect x="4.68" y="410.35" width="1.92" height="1.6" fill="#222" fill-opacity="0.66"/><rect x="7.03" y="410.35" width="3.48" height="1.6" fill="#222" fill-opacity="0.56"/><rect x="11.10" y="410.35" width="2.20" height="1.6" fill="#222" fill-opacity="0.53"/><rect x="13.70" y="410.35" width="2.04" height="1.6" fill="#222" fill-opacity="0.67"/><rect x="16.27" y="410.35" width="2.64" height="1.6" fill="#222" fill-opacity="0.56"/><rect x="19.61" y="410.35" width="3.28" height="1.6" fill="#222" fill-opacity="0.53"/><rect x="23.51" y="410.35" width="2.98" height="1.6" fill="#222" fill-opacity="0.69"/><rect x="0.00" y="412.40" width="4.37" height="1.6" fill="#222" fill-opacity="0.66"/><rect x="5.03" y="412.40" width="1.64" height="1.6" fill="#222" fill-opacity="0.54"/><rect x="7.02" y="412.40" width="2.16" height="1.6" fill="#222" fill-opacity="0.68"/><rect x="9.72" y="412.40" width="4.76" height="1.6" fill="#222" fill-opacity="0.56"/><rect x="15.12" y="412.40" width="3.07" height="1.6" fill="#222" fill-opacity="0.53"/><rect x="18.80" y="412.40" width="4.81" height="1.6" fill="#222" fill-opacity="0.50"/><rect x="24.15" y="412.40" width="2.64" height="1.6" fill="#222" fill-opacity="0.53"/><rect x="0.00" y="414.45" width="2.21" height="1.6" fill="#222" fill-opacity="0.53"/><rect x="2.75" y="414.45" width="3.78" height="1.6" fill="#222" fill-opacity="0.52"/><rect x="6.84" y="414.45" width="2.65" height="1.6" fill="#222" fill-opacity="0.62"/><rect x="9.86" y="414.45" width="2.59" height="1.6" fill="#222" fill-opacity="0.52"/><rect x="13.07" y="414.45" width="3.42" height="1.6" fill="#222" fill-opacity="0.49"/><rect x="16.83" y="414.45" width="2.88" height="1.6" fill="#222" fill-opacity="0.60"/><rect x="20.27" y="414.45" width="1.82" height="1.6" fill="#222" fill-opacity="0.51"/><rect x="22.66" y="414.45" width="2.93" height="1.6" fill="#222" fill-opacity="0.54"/><rect x="26.02" y="414.45" width="1.27" height="1.6" fill="#222" fill-opacity="0.55"/><rect x="0.00" y="416.50" width="4.52" height="1.6" fill="#222" fill-opacity="0.69"/><rect x="4.97" y="416.50" width="2.19" height="1.6" fill="#222" fill-opacity="0.63"/><rect x="7.54" y="416.50" width="1.52" height="1.6" fill="#222" fill-opacity="0.67"/><rect x="9.53" y="416.50" width="3.47" height="1.6" fill="#222" fill-opacity="0.57"/></svg>
<svg class="r" style="left:0;top:0" width="34" height="560" viewBox="0 0 34 560"><rect x="0" y="461.5" width="27" height="4.6" fill="#e2e2e2"/><rect x="0" y="461.3" width="27" height="0.6" fill="#444"/><rect x="0" y="465.9" width="27" height="0.6" fill="#444"/><rect x="26.2" y="461" width="2.4" height="5.5" fill="#222"/><rect x="0.00" y="463.00" width="2.07" height="1.6" fill="#222" fill-opacity="0.44"/><rect x="2.59" y="463.00" width="3.74" height="1.6" fill="#222" fill-opacity="0.62"/><rect x="6.67" y="463.00" width="3.64" height="1.6" fill="#222" fill-opacity="0.51"/><rect x="0.00" y="467.60" width="3.32" height="1.6" fill="#222" fill-opacity="0.67"/><rect x="3.67" y="467.60" width="3.22" height="1.6" fill="#222" fill-opacity="0.65"/><rect x="7.57" y="467.60" width="2.19" height="1.6" fill="#222" fill-opacity="0.51"/><rect x="10.44" y="467.60" width="0.96" height="1.6" fill="#222" fill-opacity="0.58"/><rect x="0.00" y="473.80" width="2.86" height="1.6" fill="#222" fill-opacity="0.56"/><rect x="3.41" y="473.80" width="4.39" height="1.6" fill="#222" fill-opacity="0.43"/><rect x="8.41" y="473.80" width="2.28" height="1.6" fill="#222" fill-opacity="0.47"/><rect x="11.32" y="473.80" width="2.29" height="1.6" fill="#222" fill-opacity="0.43"/><rect x="0.00" y="475.80" width="2.84" height="1.6" fill="#222" fill-opacity="0.42"/><rect x="3.24" y="475.80" width="4.04" height="1.6" fill="#222" fill-opacity="0.56"/><rect x="7.59" y="475.80" width="3.47" height="1.6" fill="#222" fill-opacity="0.53"/><rect x="11.38" y="475.80" width="2.84" height="1.6" fill="#222" fill-opacity="0.42"/><rect x="0.00" y="480.80" width="2.57" height="1.6" fill="#222" fill-opacity="0.47"/><rect x="3.10" y="480.80" width="2.99" height="1.6" fill="#222" fill-opacity="0.52"/><rect x="6.57" y="480.80" width="3.03" height="1.6" fill="#222" fill-opacity="0.40"/><rect x="10.16" y="480.80" width="3.21" height="1.6" fill="#222" fill-opacity="0.44"/><rect x="13.97" y="480.80" width="1.55" height="1.6" fill="#222" fill-opacity="0.48"/><rect x="0.00" y="485.30" width="1.87" height="1.6" fill="#222" fill-opacity="0.42"/><rect x="2.35" y="485.30" width="1.82" height="1.6" fill="#222" fill-opacity="0.48"/><rect x="4.67" y="485.30" width="1.64" height="1.6" fill="#222" fill-opacity="0.51"/><rect x="6.65" y="485.30" width="4.07" height="1.6" fill="#222" fill-opacity="0.54"/><rect x="11.22" y="485.30" width="1.69" height="1.6" fill="#222" fill-opacity="0.49"/><rect x="13.36" y="485.30" width="0.93" height="1.6" fill="#222" fill-opacity="0.42"/><rect x="0.00" y="487.30" width="4.35" height="1.6" fill="#222" fill-opacity="0.43"/><rect x="5.05" y="487.30" width="3.22" height="1.6" fill="#222" fill-opacity="0.57"/><rect x="8.93" y="487.30" width="2.08" height="1.6" fill="#222" fill-opacity="0.54"/><rect x="11.68" y="487.30" width="1.73" height="1.6" fill="#222" fill-opacity="0.46"/><rect x="14.02" y="487.30" width="2.06" height="1.6" fill="#222" fill-opacity="0.56"/><rect x="16.48" y="487.30" width="0.30" height="1.6" fill="#222" fill-opacity="0.43"/><rect x="0.00" y="492.30" width="2.23" height="1.6" fill="#222" fill-opacity="0.45"/><rect x="2.73" y="492.30" width="2.62" height="1.6" fill="#222" fill-opacity="0.41"/><rect x="5.72" y="492.30" width="2.06" height="1.6" fill="#222" fill-opacity="0.56"/><rect x="8.36" y="492.30" width="4.63" height="1.6" fill="#222" fill-opacity="0.43"/><rect x="13.61" y="492.30" width="0.01" height="1.6" fill="#222" fill-opacity="0.49"/><rect x="0.00" y="494.30" width="3.44" height="1.6" fill="#222" fill-opacity="0.50"/><rect x="4.10" y="494.30" width="1.87" height="1.6" fill="#222" fill-opacity="0.57"/><rect x="6.51" y="494.30" width="2.88" height="1.6" fill="#222" fill-opacity="0.54"/><rect x="9.80" y="494.30" width="4.97" height="1.6" fill="#222" fill-opacity="0.50"/><rect x="15.21" y="494.30" width="3.26" height="1.6" fill="#222" fill-opacity="0.48"/><rect x="0.00" y="502.80" width="1.67" height="1.6" fill="#222" fill-opacity="0.54"/><rect x="2.07" y="502.80" width="3.74" height="1.6" fill="#222" fill-opacity="0.57"/><rect x="6.34" y="502.80" width="3.82" height="1.6" fill="#222" fill-opacity="0.45"/><rect x="10.47" y="502.80" width="1.62" height="1.6" fill="#222" fill-opacity="0.43"/><rect x="12.63" y="502.80" width="1.25" height="1.6" fill="#222" fill-opacity="0.49"/><rect x="0.00" y="504.80" width="3.79" height="1.6" fill="#222" fill-opacity="0.40"/><rect x="4.09" y="504.80" width="2.74" height="1.6" fill="#222" fill-opacity="0.42"/><rect x="7.27" y="504.80" width="2.28" height="1.6" fill="#222" fill-opacity="0.50"/><rect x="10.09" y="504.80" width="0.63" height="1.6" fill="#222" fill-opacity="0.51"/><rect x="0.00" y="508.80" width="2.35" height="1.6" fill="#222" fill-opacity="0.43"/><rect x="2.69" y="508.80" width="3.73" height="1.6" fill="#222" fill-opacity="0.55"/><rect x="7.04" y="508.80" width="2.91" height="1.6" fill="#222" fill-opacity="0.45"/><rect x="10.25" y="508.80" width="3.76" height="1.6" fill="#222" fill-opacity="0.50"/><rect x="14.45" y="508.80" width="3.76" height="1.6" fill="#222" fill-opacity="0.48"/><rect x="18.88" y="508.80" width="0.36" height="1.6" fill="#222" fill-opacity="0.44"/><rect x="17.2" y="478.0" width="1.4" height="1.6" fill="#333"/><rect x="19" y="479.5" width="9.8" height="0.7" fill="#333"/><rect x="17.2" y="489.5" width="1.4" height="1.6" fill="#333"/><rect x="19" y="491" width="9.8" height="0.7" fill="#333"/><rect x="17.2" y="496.0" width="1.4" height="1.6" fill="#333"/><rect x="19" y="497.5" width="9.8" height="0.7" fill="#333"/><rect x="17.2" y="499.0" width="1.4" height="1.6" fill="#333"/><rect x="19" y="500.5" width="9.8" height="0.7" fill="#333"/><rect x="17.2" y="504.0" width="1.4" height="1.6" fill="#333"/><rect x="19" y="505.5" width="9.8" height="0.7" fill="#333"/><rect x="17.2" y="508.3" width="1.4" height="1.6" fill="#333"/><rect x="19" y="509.8" width="9.8" height="0.7" fill="#333"/><rect x="0" y="513.3" width="27" height="3.8" fill="#e2e2e2"/><rect x="0" y="513.2" width="27" height="0.6" fill="#444"/><rect x="0" y="516.9" width="27" height="0.6" fill="#444"/><rect x="26.2" y="513" width="2.4" height="4.6" fill="#222"/><rect x="0.00" y="514.80" width="3.36" height="1.6" fill="#222" fill-opacity="0.52"/><rect x="3.76" y="514.80" width="1.70" height="1.6" fill="#222" fill-opacity="0.59"/><rect x="5.76" y="514.80" width="3.43" height="1.6" fill="#222" fill-opacity="0.62"/><rect x="9.55" y="514.80" width="0.38" height="1.6" fill="#222" fill-opacity="0.56"/><rect x="0.00" y="518.30" width="2.11" height="1.6" fill="#222" fill-opacity="0.54"/><rect x="2.53" y="518.30" width="1.67" height="1.6" fill="#222" fill-opacity="0.67"/><rect x="4.81" y="518.30" width="4.00" height="1.6" fill="#222" fill-opacity="0.48"/><rect x="9.46" y="518.30" width="4.11" height="1.6" fill="#222" fill-opacity="0.58"/><rect x="14.16" y="518.30" width="3.08" height="1.6" fill="#222" fill-opacity="0.53"/><rect x="17.59" y="518.30" width="0.17" height="1.6" fill="#222" fill-opacity="0.49"/><rect x="0.00" y="528.30" width="4.46" height="1.6" fill="#222" fill-opacity="0.58"/><rect x="4.87" y="528.30" width="3.44" height="1.6" fill="#222" fill-opacity="0.52"/><rect x="8.92" y="528.30" width="3.33" height="1.6" fill="#222" fill-opacity="0.49"/><rect x="12.81" y="528.30" width="3.53" height="1.6" fill="#222" fill-opacity="0.48"/><rect x="0.00" y="534.30" width="2.33" height="1.6" fill="#222" fill-opacity="0.58"/><rect x="3.00" y="534.30" width="4.11" height="1.6" fill="#222" fill-opacity="0.50"/><rect x="7.77" y="534.30" width="2.65" height="1.6" fill="#222" fill-opacity="0.49"/><rect x="11.08" y="534.30" width="0.04" height="1.6" fill="#222" fill-opacity="0.57"/><rect x="17.2" y="518.5" width="1.4" height="1.6" fill="#333"/><rect x="19" y="520" width="9.8" height="0.7" fill="#333"/><rect x="17.2" y="523.5" width="1.4" height="1.6" fill="#333"/><rect x="19" y="525" width="9.8" height="0.7" fill="#333"/><rect x="17.2" y="529.5" width="1.4" height="1.6" fill="#333"/><rect x="19" y="531" width="9.8" height="0.7" fill="#333"/><rect x="17.2" y="534.5" width="1.4" height="1.6" fill="#333"/><rect x="19" y="536" width="9.8" height="0.7" fill="#333"/><rect x="17.2" y="537.0" width="1.4" height="1.6" fill="#333"/><rect x="19" y="538.5" width="9.8" height="0.7" fill="#333"/><rect x="0.00" y="540.30" width="3.14" height="1.6" fill="#222" fill-opacity="1.00"/><rect x="3.72" y="540.30" width="4.50" height="1.6" fill="#222" fill-opacity="1.00"/><rect x="8.81" y="540.30" width="3.50" height="1.6" fill="#222" fill-opacity="1.00"/><rect x="12.69" y="540.30" width="3.68" height="1.6" fill="#222" fill-opacity="1.00"/><rect x="17.04" y="540.30" width="2.01" height="1.6" fill="#222" fill-opacity="1.00"/><rect x="19.39" y="540.30" width="4.75" height="1.6" fill="#222" fill-opacity="1.00"/><rect x="24.49" y="540.30" width="1.60" height="1.6" fill="#222" fill-opacity="1.00"/><rect x="0.00" y="542.40" width="3.94" height="1.6" fill="#222" fill-opacity="1.00"/><rect x="4.27" y="542.40" width="3.57" height="1.6" fill="#222" fill-opacity="1.00"/><rect x="8.46" y="542.40" width="4.37" height="1.6" fill="#222" fill-opacity="1.00"/><rect x="13.15" y="542.40" width="4.54" height="1.6" fill="#222" fill-opacity="1.00"/><rect x="18.37" y="542.40" width="1.87" height="1.6" fill="#222" fill-opacity="1.00"/><rect x="20.59" y="542.40" width="1.62" height="1.6" fill="#222" fill-opacity="1.00"/><rect x="22.83" y="542.40" width="3.72" height="1.6" fill="#222" fill-opacity="1.00"/><rect x="0.00" y="544.50" width="1.85" height="1.6" fill="#222" fill-opacity="1.00"/><rect x="2.45" y="544.50" width="2.22" height="1.6" fill="#222" fill-opacity="1.00"/><rect x="5.14" y="544.50" width="1.57" height="1.6" fill="#222" fill-opacity="1.00"/><rect x="7.13" y="544.50" width="4.01" height="1.6" fill="#222" fill-opacity="1.00"/><rect x="11.56" y="544.50" width="4.87" height="1.6" fill="#222" fill-opacity="1.00"/><rect x="17.07" y="544.50" width="3.66" height="1.6" fill="#222" fill-opacity="1.00"/><rect x="21.20" y="544.50" width="3.03" height="1.6" fill="#222" fill-opacity="1.00"/><rect x="24.67" y="544.50" width="2.90" height="1.6" fill="#222" fill-opacity="1.00"/><rect x="0.00" y="546.60" width="1.82" height="1.6" fill="#222" fill-opacity="1.00"/><rect x="2.19" y="546.60" width="1.50" height="1.6" fill="#222" fill-opacity="1.00"/><rect x="4.30" y="546.60" width="4.92" height="1.6" fill="#222" fill-opacity="1.00"/><rect x="9.71" y="546.60" width="3.22" height="1.6" fill="#222" fill-opacity="1.00"/><rect x="13.31" y="546.60" width="3.23" height="1.6" fill="#222" fill-opacity="1.00"/><rect x="17.17" y="546.60" width="2.41" height="1.6" fill="#222" fill-opacity="1.00"/><rect x="20.00" y="546.60" width="2.25" height="1.6" fill="#222" fill-opacity="1.00"/><rect x="22.75" y="546.60" width="1.88" height="1.6" fill="#222" fill-opacity="1.00"/><rect x="24.97" y="546.60" width="1.74" height="1.6" fill="#222" fill-opacity="1.00"/><rect x="0.00" y="548.70" width="2.74" height="1.6" fill="#222" fill-opacity="1.00"/><rect x="3.20" y="548.70" width="4.62" height="1.6" fill="#222" fill-opacity="1.00"/><rect x="8.47" y="548.70" width="1.59" height="1.6" fill="#222" fill-opacity="1.00"/><rect x="10.47" y="548.70" width="4.65" height="1.6" fill="#222" fill-opacity="1.00"/><rect x="15.57" y="548.70" width="4.59" height="1.6" fill="#222" fill-opacity="1.00"/><rect x="20.65" y="548.70" width="3.36" height="1.6" fill="#222" fill-opacity="1.00"/><rect x="24.61" y="548.70" width="2.44" height="1.6" fill="#222" fill-opacity="1.00"/><rect x="0.00" y="550.80" width="3.82" height="1.6" fill="#222" fill-opacity="1.00"/><rect x="4.19" y="550.80" width="3.04" height="1.6" fill="#222" fill-opacity="1.00"/><rect x="7.75" y="550.80" width="1.94" height="1.6" fill="#222" fill-opacity="1.00"/><rect x="10.35" y="550.80" width="2.33" height="1.6" fill="#222" fill-opacity="1.00"/><rect x="13.10" y="550.80" width="3.96" height="1.6" fill="#222" fill-opacity="1.00"/><rect x="17.42" y="550.80" width="0.69" height="1.6" fill="#222" fill-opacity="1.00"/></svg>
<div class="r" style="left:258px;top:138px;width:575px;height:417px;background:#fff"></div>
<div class="r" style="left:257.0px;top:138px;width:1.0px;height:416.5px;background:#eceef1"></div>
<div class="r" style="left:0;top:0;width:930px;height:554.5px;overflow:hidden"><div class="t" style="left:292px;top:163.39px;font-size:6.2px;font-weight:400;color:#161616;">Form</div>
<div class="t" style="left:311.8px;top:150.67px;font-size:22.4px;font-weight:700;color:#000;transform:scaleX(0.895);transform-origin:0 0;letter-spacing:-0.3px;-webkit-text-stroke:0.9px #000">W-4</div>
<div class="t" style="left:292px;top:181.23px;font-size:5.9px;font-weight:400;color:#161616;">Department of the Treasury</div>
<div class="t" style="left:292px;top:189.23px;font-size:5.9px;font-weight:400;color:#161616;">Internal Revenue Service</div>
<div class="r" style="left:365.9px;top:151px;width:1.2px;height:45px;background:#000"></div>
<div class="r" style="left:724.6999999999999px;top:151px;width:1.2px;height:45px;background:#000"></div>
<div class="t" style="left:546px;top:151.17px;font-size:12.4px;font-weight:700;color:#000;transform:translateX(-50%)">Employee’s Withholding Certificate</div>
<svg class="r" style="left:370.6px;top:169.00px" width="5.40" height="6" viewBox="0 0 9 10"><path d="M0 0L9 5L0 10Z" fill="#000"/></svg>
<div class="t" style="left:378.5px;top:169.05px;font-size:7.12px;font-weight:700;color:#000;">Complete Form W-4 so that your employer can withhold the correct federal income tax from your pay.</div>
<svg class="r" style="left:482.8px;top:177.60px" width="5.40" height="6" viewBox="0 0 9 10"><path d="M0 0L9 5L0 10Z" fill="#000"/></svg>
<div class="t" style="left:490.7px;top:177.37px;font-size:7.52px;font-weight:700;color:#000;">Give Form W-4 to your employer.</div>
<svg class="r" style="left:454.8px;top:186.90px" width="5.40" height="6" viewBox="0 0 9 10"><path d="M0 0L9 5L0 10Z" fill="#000"/></svg>
<div class="t" style="left:463.6px;top:186.98px;font-size:7.48px;font-weight:700;color:#000;">Your withholding is subject to review by the IRS.</div>
<div class="t" style="left:732px;top:153.17px;font-size:6.65px;font-weight:400;color:#161616;">OMB No. 1545-0074</div>
<div class="r" style="left:725.3px;top:162.0px;width:74.70000000000005px;height:1.0px;background:#333"></div>
<div class="t" style="left:738.8px;top:169.27px;font-size:19px;font-weight:700;color:#000;letter-spacing:1.7px;-webkit-text-stroke:0.3px #000"><span style="color:#fff;-webkit-text-stroke:0.6px #222">20</span>22</div>
<div class="r" style="left:292px;top:195.5px;width:508px;height:1.4px;background:#000"></div>
<div class="t" style="left:292.4px;top:200.72px;font-size:9.1px;font-weight:700;color:#000;">Step 1:</div>
<div class="t" style="left:292.4px;top:214.62px;font-size:9.1px;font-weight:700;color:#000;">Enter</div>
<div class="t" style="left:292.4px;top:225.62px;font-size:9.1px;font-weight:700;color:#000;">Personal</div>
<div class="t" style="left:292.4px;top:236.72px;font-size:9.1px;font-weight:700;color:#000;">Information</div>
<div class="r" style="left:345.95px;top:196px;width:1.1px;height:101.5px;background:#000"></div>
<div class="r" style="left:347px;top:206.3px;width:358px;height:12.2px;background:#d5e5fb"></div>
<div class="r" style="left:706px;top:206.3px;width:94px;height:12.2px;background:#d5e5fb"></div>
<div class="r" style="left:347px;top:228.7px;width:358px;height:12.7px;background:#d5e5fb"></div>
<div class="r" style="left:347px;top:251.2px;width:358px;height:12.4px;background:#d5e5fb"></div>
<div class="r" style="left:515.1px;top:196px;width:1.0px;height:22.599999999999994px;background:#444"></div>
<div class="r" style="left:704.6500000000001px;top:196px;width:1.1px;height:68px;background:#222"></div>
<div class="r" style="left:346.5px;top:218.1px;width:453.5px;height:1.0px;background:#555"></div>
<div class="r" style="left:346.5px;top:241.0px;width:358.70000000000005px;height:1.0px;background:#555"></div>
<div class="r" style="left:346.5px;top:263.3px;width:453.5px;height:1.0px;background:#555"></div>
<div class="t" style="left:350px;top:198.44px;font-size:6.5px;font-weight:700;color:#000;">(a)</div>
<div class="t" style="left:363px;top:198.37px;font-size:6.66px;font-weight:400;color:#161616;">First name and middle initial</div>
<div class="t" style="left:519.5px;top:198.40px;font-size:6.6px;font-weight:400;color:#161616;">Last name</div>
<div class="t" style="left:709px;top:197.75px;font-size:6.5px;font-weight:700;color:#000;">(b)</div>
<div class="t" style="left:722.3px;top:197.75px;font-size:6.5px;font-weight:700;color:#000;">Social security number</div>
<div class="t" style="left:350.2px;top:220.90px;font-size:6.6px;font-weight:400;color:#161616;">Address</div>
<div class="t" style="left:350.2px;top:243.40px;font-size:6.6px;font-weight:400;color:#161616;">City or town, state, and ZIP code</div>
<svg class="r" style="left:709px;top:222.30px" width="4.14" height="4.6" viewBox="0 0 9 10"><path d="M0 0L9 5L0 10Z" fill="#000"/></svg>
<div class="t" style="left:714px;top:221.54px;font-size:6.5px;font-weight:700;color:#000;">Does your name match the</div>
<div class="t" style="left:708.8px;top:228.34px;font-size:6.5px;font-weight:700;color:#000;">name on your social security</div>
<div class="t" style="left:708.8px;top:234.84px;font-size:6.5px;font-weight:400;color:#161616;"><b>card?</b> If not, to ensure you get</div>
<div class="t" style="left:708.8px;top:241.84px;font-size:6.5px;font-weight:400;color:#161616;">credit for your earnings, contact</div>
<div class="t" style="left:708.8px;top:248.54px;font-size:6.5px;font-weight:400;color:#161616;">SSA at 800-772-1213 or go to</div>
<div class="t" style="left:708.8px;top:255.55px;font-size:6.5px;font-weight:400;color:#161616;"><i>www.ssa.gov.</i></div>
<div class="t" style="left:350.2px;top:267.55px;font-size:6.5px;font-weight:700;color:#000;">(c)</div>
<div class="r" style="left:366.2px;top:265.9px;width:8px;height:8px;background:#d5e5fb;border:0.8px solid #9fb3cf;box-sizing:border-box"></div>
<div class="r" style="left:366.2px;top:276.9px;width:8px;height:8px;background:#d5e5fb;border:0.8px solid #9fb3cf;box-sizing:border-box"></div>
<div class="r" style="left:366.2px;top:288px;width:8px;height:8px;background:#d5e5fb;border:0.8px solid #9fb3cf;box-sizing:border-box"></div>
<div class="t" style="left:376.8px;top:267.37px;font-size:6.45px;font-weight:400;color:#161616;"><b>Single</b> or <b>Married filing separately</b></div>
<div class="t" style="left:376.8px;top:278.77px;font-size:6.45px;font-weight:400;color:#161616;"><b>Married filing jointly</b> or <b>Qualifying widow(er)</b></div>
<div class="t" style="left:376.8px;top:289.57px;font-size:6.45px;font-weight:400;color:#161616;letter-spacing:0.02px"><b>Head of household</b> (Check only if you’re unmarried and pay more than half the costs of keeping up a home for yourself and a qualifying individual.)</div>
<div class="r" style="left:292px;top:296.95000000000005px;width:508px;height:1.3px;background:#000"></div>
<div class="t" style="left:292px;top:305.83px;font-size:8.45px;font-weight:400;color:#161616;"><b style="color:#000">Complete Steps 2–4 ONLY if they apply to you; otherwise, skip to Step 5.</b> See page 2 for more information on each step, who can</div>
<div class="t" style="left:292px;top:316.29px;font-size:8.75px;font-weight:400;color:#161616;">claim exemption from withholding, when to use the estimator at <i>www.irs.gov/W4App</i>, and privacy.</div>
<div class="r" style="left:292px;top:330.95000000000005px;width:508px;height:1.3px;background:#000"></div>
<div class="t" style="left:292.2px;top:336.43px;font-size:9.3px;font-weight:700;color:#000;">Step 2:</div>
<div class="t" style="left:292.2px;top:349.63px;font-size:9.3px;font-weight:700;color:#000;">Multiple Jobs</div>
<div class="t" style="left:292.2px;top:360.83px;font-size:9.3px;font-weight:700;color:#000;">or Spouse</div>
<div class="t" style="left:292.2px;top:372.03px;font-size:9.3px;font-weight:700;color:#000;">Works</div>
<div class="t" style="left:373.6px;top:336.77px;font-size:8.58px;font-weight:400;color:#161616;">Complete this step if you (1) hold more than one job at a time, or (2) are married filing jointly and your spouse</div>
<div class="t" style="left:373.6px;top:347.07px;font-size:8.58px;font-weight:400;color:#161616;">also works. The correct amount of withholding depends on income earned from all of these jobs.</div>
<div class="t" style="left:373.6px;top:361.17px;font-size:8.58px;font-weight:400;color:#161616;">Do <b>only one</b> of the following.</div>
<div class="t" style="left:373.6px;top:373.27px;font-size:8.58px;font-weight:400;color:#161616;"><b>(a)</b></div>
<div class="t" style="left:387px;top:373.27px;font-size:8.58px;font-weight:400;color:#161616;">Use the estimator at <i>www.irs.gov/W4App</i> for most accurate withholding for this step (and Steps 3–4); <b>or</b></div>
<div class="t" style="left:373.6px;top:385.87px;font-size:8.58px;font-weight:400;color:#161616;"><b>(b)</b></div>
<div class="t" style="left:387px;top:385.87px;font-size:8.58px;font-weight:400;color:#161616;">Use the Multiple Jobs Worksheet on page 3 and enter the result in Step 4(c) below for roughly accurate</div>
<div class="t" style="left:387px;top:396.17px;font-size:8.58px;font-weight:400;color:#161616;">withholding; <b>or</b></div>
<div class="t" style="left:373.6px;top:407.97px;font-size:8.58px;font-weight:400;color:#161616;"><b>(c)</b></div>
<div class="t" style="left:387px;top:407.97px;font-size:8.58px;font-weight:400;color:#161616;">If there are only two jobs total, you may check this box. Do the same on Form W-4 for the other job. This</div>
<div class="t" style="left:387px;top:418.67px;font-size:8.58px;font-weight:400;color:#161616;">option is accurate for jobs with similar pay; otherwise, more tax than necessary may be withheld</div>
<div class="t" style="left:754.5px;top:418.67px;font-size:8.58px;font-weight:400;color:#161616;">.</div>
<div class="t" style="left:766px;top:418.67px;font-size:8.58px;font-weight:400;color:#161616;">.</div>
<svg class="r" style="left:778.6px;top:418.70px" width="5.40" height="6" viewBox="0 0 9 10"><path d="M0 0L9 5L0 10Z" fill="#000"/></svg>
<div class="r" style="left:790px;top:418.2px;width:8.2px;height:8.4px;background:#d5e5fb;border:0.8px solid #9fb3cf;box-sizing:border-box"></div>
<div class="t" style="left:373.6px;top:430.87px;font-size:8.58px;font-weight:400;color:#161616;"><b>TIP:</b> To be accurate, submit a 2022 Form W-4 for all other jobs. If you (or your spouse) have self-employment</div>
<div class="t" style="left:373.6px;top:440.97px;font-size:8.58px;font-weight:400;color:#161616;">income, including as an independent contractor, use the estimator.</div>
<div class="t" style="left:292px;top:454.70px;font-size:8.5px;font-weight:400;color:#161616;"><b style="color:#000">Complete Steps 3–4(b) on Form W-4 for only ONE of these jobs.</b> Leave those steps blank for the other jobs. (Your withholding will</div>
<div class="t" style="left:292px;top:465.27px;font-size:8.58px;font-weight:400;color:#161616;">be most accurate if you complete Steps 3–4(b) on the Form W-4 for the highest paying job.)</div>
<div class="r" style="left:292px;top:477.65000000000003px;width:508px;height:1.3px;background:#000"></div>
<div class="t" style="left:292.2px;top:482.83px;font-size:9.3px;font-weight:700;color:#000;">Step 3:</div>
<div class="t" style="left:292.2px;top:496.93px;font-size:9.3px;font-weight:700;color:#000;">Claim</div>
<div class="t" style="left:292.2px;top:507.83px;font-size:9.3px;font-weight:700;color:#000;">Dependents</div>
<div class="t" style="left:373.6px;top:483.63px;font-size:8.45px;font-weight:400;color:#161616;">If your total income will be $200,000 or less ($400,000 or less if married filing jointly):</div>
<div class="t" style="left:387px;top:498.64px;font-size:8.22px;font-weight:400;color:#161616;">Multiply the number of qualifying children under age 17 by $2,000</div>
<svg class="r" style="left:627.5px;top:497.80px" width="5.40" height="6" viewBox="0 0 9 10"><path d="M0 0L9 5L0 10Z" fill="#000"/></svg>
<div class="t" style="left:638.4px;top:497.27px;font-size:8.58px;font-weight:400;color:#161616;">$</div>
<div class="r" style="left:644.7px;top:495.3px;width:60.3px;height:10.8px;background:#d5e5fb;border:0.6px solid #c5d8f5;box-sizing:border-box"></div>
<div class="r" style="left:637px;top:506.15000000000003px;width:68px;height:0.9px;background:#333"></div>
<div class="t" style="left:387px;top:515.16px;font-size:8.6px;font-weight:400;color:#161616;">Multiply the number of other dependents by $500</div>
<div class="t" style="left:585.4px;top:515.17px;font-size:8.58px;font-weight:400;color:#161616;">.</div>
<div class="t" style="left:596.6999999999999px;top:515.17px;font-size:8.58px;font-weight:400;color:#161616;">.</div>
<div class="t" style="left:608.0px;top:515.17px;font-size:8.58px;font-weight:400;color:#161616;">.</div>
<div class="t" style="left:619.3px;top:515.17px;font-size:8.58px;font-weight:400;color:#161616;">.</div>
<svg class="r" style="left:627.5px;top:514.60px" width="5.40" height="6" viewBox="0 0 9 10"><path d="M0 0L9 5L0 10Z" fill="#000"/></svg>
<div class="t" style="left:638.4px;top:514.17px;font-size:8.58px;font-weight:400;color:#161616;">$</div>
<div class="r" style="left:644.7px;top:512.4px;width:60.3px;height:11.1px;background:#d5e5fb;border:0.6px solid #c5d8f5;box-sizing:border-box"></div>
<div class="r" style="left:637px;top:523.3499999999999px;width:68px;height:0.9px;background:#333"></div>
<div class="t" style="left:373.6px;top:531.37px;font-size:8.58px;font-weight:400;color:#161616;">Add the amounts above and enter the total here</div>
<div class="t" style="left:563.4px;top:531.77px;font-size:8.58px;font-weight:400;color:#161616;">.</div>
<div class="t" style="left:574.68px;top:531.77px;font-size:8.58px;font-weight:400;color:#161616;">.</div>
<div class="t" style="left:585.9599999999999px;top:531.77px;font-size:8.58px;font-weight:400;color:#161616;">.</div>
<div class="t" style="left:597.24px;top:531.77px;font-size:8.58px;font-weight:400;color:#161616;">.</div>
<div class="t" style="left:608.52px;top:531.77px;font-size:8.58px;font-weight:400;color:#161616;">.</div>
<div class="t" style="left:619.8px;top:531.77px;font-size:8.58px;font-weight:400;color:#161616;">.</div>
<div class="t" style="left:631.0799999999999px;top:531.77px;font-size:8.58px;font-weight:400;color:#161616;">.</div>
<div class="t" style="left:642.36px;top:531.77px;font-size:8.58px;font-weight:400;color:#161616;">.</div>
<div class="t" style="left:653.64px;top:531.77px;font-size:8.58px;font-weight:400;color:#161616;">.</div>
<div class="t" style="left:664.92px;top:531.77px;font-size:8.58px;font-weight:400;color:#161616;">.</div>
<div class="t" style="left:676.1999999999999px;top:531.77px;font-size:8.58px;font-weight:400;color:#161616;">.</div>
<div class="t" style="left:687.48px;top:531.77px;font-size:8.58px;font-weight:400;color:#161616;">.</div>
<div class="t" style="left:698.76px;top:531.77px;font-size:8.58px;font-weight:400;color:#161616;">.</div>
<div class="t" style="left:719.7px;top:530.70px;font-size:8.3px;font-weight:700;color:#000;">3</div>
<div class="t" style="left:733.2px;top:530.57px;font-size:8.58px;font-weight:400;color:#161616;">$</div>
<div class="r" style="left:739.5px;top:529.2px;width:60.3px;height:11.2px;background:#d5e5fb;border:0.6px solid #c5d8f5;box-sizing:border-box"></div>
<div class="r" style="left:711.25px;top:478.3px;width:1.1px;height:76.69999999999999px;background:#000"></div>
<div class="r" style="left:731.5500000000001px;top:478.3px;width:1.1px;height:76.69999999999999px;background:#000"></div>
<div class="r" style="left:292px;top:539.95px;width:508px;height:1.3px;background:#000"></div>
<div class="t" style="left:292.2px;top:544.73px;font-size:9.3px;font-weight:700;color:#000;">Step 4</div>
<div class="t" style="left:373.6px;top:544.5px;width:331.5px;font-size:8.5px;color:#333;white-space:normal;text-align:justify;text-align-last:justify;height:9px;overflow:hidden"><b>(a) Other income (not from jobs).</b> If you want tax withheld for other income you</div></div>
<div class="r" style="left:-52px;top:190.5px;width:86px;height:101px;overflow:hidden;background:#fff"><div class="r thumb" style="left:0;top:0;width:930px;height:900px;transform-origin:0 0;transform:matrix(0.147,0,0,0.1376,-37.8,-16.19999999999999)"><div class="t" style="left:292px;top:163.39px;font-size:6.2px;font-weight:400;color:#161616;">Form</div>
<div class="t" style="left:311.8px;top:150.67px;font-size:22.4px;font-weight:700;color:#000;transform:scaleX(0.895);transform-origin:0 0;letter-spacing:-0.3px;-webkit-text-stroke:0.9px #000">W-4</div>
<div class="t" style="left:292px;top:181.23px;font-size:5.9px;font-weight:400;color:#161616;">Department of the Treasury</div>
<div class="t" style="left:292px;top:189.23px;font-size:5.9px;font-weight:400;color:#161616;">Internal Revenue Service</div>
<div class="r" style="left:363.5px;top:151px;width:6.0px;height:45px;background:#000"></div>
<div class="r" style="left:722.3px;top:151px;width:6.0px;height:45px;background:#000"></div>
<div class="t" style="left:546px;top:151.17px;font-size:12.4px;font-weight:700;color:#000;transform:translateX(-50%)">Employee’s Withholding Certificate</div>
<svg class="r" style="left:370.6px;top:169.00px" width="5.40" height="6" viewBox="0 0 9 10"><path d="M0 0L9 5L0 10Z" fill="#000"/></svg>
<div class="t" style="left:378.5px;top:169.05px;font-size:7.12px;font-weight:700;color:#000;">Complete Form W-4 so that your employer can withhold the correct federal income tax from your pay.</div>
<svg class="r" style="left:482.8px;top:177.60px" width="5.40" height="6" viewBox="0 0 9 10"><path d="M0 0L9 5L0 10Z" fill="#000"/></svg>
<div class="t" style="left:490.7px;top:177.37px;font-size:7.52px;font-weight:700;color:#000;">Give Form W-4 to your employer.</div>
<svg class="r" style="left:454.8px;top:186.90px" width="5.40" height="6" viewBox="0 0 9 10"><path d="M0 0L9 5L0 10Z" fill="#000"/></svg>
<div class="t" style="left:463.6px;top:186.98px;font-size:7.48px;font-weight:700;color:#000;">Your withholding is subject to review by the IRS.</div>
<div class="t" style="left:732px;top:153.17px;font-size:6.65px;font-weight:400;color:#161616;">OMB No. 1545-0074</div>
<div class="r" style="left:725.3px;top:160.0px;width:74.70000000000005px;height:5.0px;background:#333"></div>
<div class="t" style="left:738.8px;top:169.27px;font-size:19px;font-weight:700;color:#000;letter-spacing:1.7px;-webkit-text-stroke:0.3px #000"><span style="color:#fff;-webkit-text-stroke:0.6px #222">20</span>22</div>
<div class="r" style="left:292px;top:192.7px;width:508px;height:7.0px;background:#000"></div>
<div class="t" style="left:292.4px;top:200.72px;font-size:9.1px;font-weight:700;color:#000;">Step 1:</div>
<div class="t" style="left:292.4px;top:214.62px;font-size:9.1px;font-weight:700;color:#000;">Enter</div>
<div class="t" style="left:292.4px;top:225.62px;font-size:9.1px;font-weight:700;color:#000;">Personal</div>
<div class="t" style="left:292.4px;top:236.72px;font-size:9.1px;font-weight:700;color:#000;">Information</div>
<div class="r" style="left:343.75px;top:196px;width:5.5px;height:101.5px;background:#000"></div>
<div class="r" style="left:347px;top:206.3px;width:358px;height:12.2px;background:#d5e5fb"></div>
<div class="r" style="left:706px;top:206.3px;width:94px;height:12.2px;background:#d5e5fb"></div>
<div class="r" style="left:347px;top:228.7px;width:358px;height:12.7px;background:#d5e5fb"></div>
<div class="r" style="left:347px;top:251.2px;width:358px;height:12.4px;background:#d5e5fb"></div>
<div class="r" style="left:513.1px;top:196px;width:5.0px;height:22.599999999999994px;background:#444"></div>
<div class="r" style="left:702.45px;top:196px;width:5.5px;height:68px;background:#222"></div>
<div class="r" style="left:346.5px;top:216.1px;width:453.5px;height:5.0px;background:#555"></div>
<div class="r" style="left:346.5px;top:239.0px;width:358.70000000000005px;height:5.0px;background:#555"></div>
<div class="r" style="left:346.5px;top:261.3px;width:453.5px;height:5.0px;background:#555"></div>
<div class="t" style="left:350px;top:198.44px;font-size:6.5px;font-weight:700;color:#000;">(a)</div>
<div class="t" style="left:363px;top:198.37px;font-size:6.66px;font-weight:400;color:#161616;">First name and middle initial</div>
<div class="t" style="left:519.5px;top:198.40px;font-size:6.6px;font-weight:400;color:#161616;">Last name</div>
<div class="t" style="left:709px;top:197.75px;font-size:6.5px;font-weight:700;color:#000;">(b)</div>
<div class="t" style="left:722.3px;top:197.75px;font-size:6.5px;font-weight:700;color:#000;">Social security number</div>
<div class="t" style="left:350.2px;top:220.90px;font-size:6.6px;font-weight:400;color:#161616;">Address</div>
<div class="t" style="left:350.2px;top:243.40px;font-size:6.6px;font-weight:400;color:#161616;">City or town, state, and ZIP code</div>
<svg class="r" style="left:709px;top:222.30px" width="4.14" height="4.6" viewBox="0 0 9 10"><path d="M0 0L9 5L0 10Z" fill="#000"/></svg>
<div class="t" style="left:714px;top:221.54px;font-size:6.5px;font-weight:700;color:#000;">Does your name match the</div>
<div class="t" style="left:708.8px;top:228.34px;font-size:6.5px;font-weight:700;color:#000;">name on your social security</div>
<div class="t" style="left:708.8px;top:234.84px;font-size:6.5px;font-weight:400;color:#161616;"><b>card?</b> If not, to ensure you get</div>
<div class="t" style="left:708.8px;top:241.84px;font-size:6.5px;font-weight:400;color:#161616;">credit for your earnings, contact</div>
<div class="t" style="left:708.8px;top:248.54px;font-size:6.5px;font-weight:400;color:#161616;">SSA at 800-772-1213 or go to</div>
<div class="t" style="left:708.8px;top:255.55px;font-size:6.5px;font-weight:400;color:#161616;"><i>www.ssa.gov.</i></div>
<div class="t" style="left:350.2px;top:267.55px;font-size:6.5px;font-weight:700;color:#000;">(c)</div>
<div class="r" style="left:366.2px;top:265.9px;width:8px;height:8px;background:#d5e5fb;border:0.8px solid #9fb3cf;box-sizing:border-box"></div>
<div class="r" style="left:366.2px;top:276.9px;width:8px;height:8px;background:#d5e5fb;border:0.8px solid #9fb3cf;box-sizing:border-box"></div>
<div class="r" style="left:366.2px;top:288px;width:8px;height:8px;background:#d5e5fb;border:0.8px solid #9fb3cf;box-sizing:border-box"></div>
<div class="t" style="left:376.8px;top:267.37px;font-size:6.45px;font-weight:400;color:#161616;"><b>Single</b> or <b>Married filing separately</b></div>
<div class="t" style="left:376.8px;top:278.77px;font-size:6.45px;font-weight:400;color:#161616;"><b>Married filing jointly</b> or <b>Qualifying widow(er)</b></div>
<div class="t" style="left:376.8px;top:289.57px;font-size:6.45px;font-weight:400;color:#161616;letter-spacing:0.02px"><b>Head of household</b> (Check only if you’re unmarried and pay more than half the costs of keeping up a home for yourself and a qualifying individual.)</div>
<div class="r" style="left:292px;top:294.35px;width:508px;height:6.5px;background:#000"></div>
<div class="t" style="left:292px;top:305.83px;font-size:8.45px;font-weight:400;color:#161616;"><b style="color:#000">Complete Steps 2–4 ONLY if they apply to you; otherwise, skip to Step 5.</b> See page 2 for more information on each step, who can</div>
<div class="t" style="left:292px;top:316.29px;font-size:8.75px;font-weight:400;color:#161616;">claim exemption from withholding, when to use the estimator at <i>www.irs.gov/W4App</i>, and privacy.</div>
<div class="r" style="left:292px;top:328.35px;width:508px;height:6.5px;background:#000"></div>
<div class="t" style="left:292.2px;top:336.43px;font-size:9.3px;font-weight:700;color:#000;">Step 2:</div>
<div class="t" style="left:292.2px;top:349.63px;font-size:9.3px;font-weight:700;color:#000;">Multiple Jobs</div>
<div class="t" style="left:292.2px;top:360.83px;font-size:9.3px;font-weight:700;color:#000;">or Spouse</div>
<div class="t" style="left:292.2px;top:372.03px;font-size:9.3px;font-weight:700;color:#000;">Works</div>
<div class="t" style="left:373.6px;top:336.77px;font-size:8.58px;font-weight:400;color:#161616;">Complete this step if you (1) hold more than one job at a time, or (2) are married filing jointly and your spouse</div>
<div class="t" style="left:373.6px;top:347.07px;font-size:8.58px;font-weight:400;color:#161616;">also works. The correct amount of withholding depends on income earned from all of these jobs.</div>
<div class="t" style="left:373.6px;top:361.17px;font-size:8.58px;font-weight:400;color:#161616;">Do <b>only one</b> of the following.</div>
<div class="t" style="left:373.6px;top:373.27px;font-size:8.58px;font-weight:400;color:#161616;"><b>(a)</b></div>
<div class="t" style="left:387px;top:373.27px;font-size:8.58px;font-weight:400;color:#161616;">Use the estimator at <i>www.irs.gov/W4App</i> for most accurate withholding for this step (and Steps 3–4); <b>or</b></div>
<div class="t" style="left:373.6px;top:385.87px;font-size:8.58px;font-weight:400;color:#161616;"><b>(b)</b></div>
<div class="t" style="left:387px;top:385.87px;font-size:8.58px;font-weight:400;color:#161616;">Use the Multiple Jobs Worksheet on page 3 and enter the result in Step 4(c) below for roughly accurate</div>
<div class="t" style="left:387px;top:396.17px;font-size:8.58px;font-weight:400;color:#161616;">withholding; <b>or</b></div>
<div class="t" style="left:373.6px;top:407.97px;font-size:8.58px;font-weight:400;color:#161616;"><b>(c)</b></div>
<div class="t" style="left:387px;top:407.97px;font-size:8.58px;font-weight:400;color:#161616;">If there are only two jobs total, you may check this box. Do the same on Form W-4 for the other job. This</div>
<div class="t" style="left:387px;top:418.67px;font-size:8.58px;font-weight:400;color:#161616;">option is accurate for jobs with similar pay; otherwise, more tax than necessary may be withheld</div>
<div class="t" style="left:754.5px;top:418.67px;font-size:8.58px;font-weight:400;color:#161616;">.</div>
<div class="t" style="left:766px;top:418.67px;font-size:8.58px;font-weight:400;color:#161616;">.</div>
<svg class="r" style="left:778.6px;top:418.70px" width="5.40" height="6" viewBox="0 0 9 10"><path d="M0 0L9 5L0 10Z" fill="#000"/></svg>
<div class="r" style="left:790px;top:418.2px;width:8.2px;height:8.4px;background:#d5e5fb;border:0.8px solid #9fb3cf;box-sizing:border-box"></div>
<div class="t" style="left:373.6px;top:430.87px;font-size:8.58px;font-weight:400;color:#161616;"><b>TIP:</b> To be accurate, submit a 2022 Form W-4 for all other jobs. If you (or your spouse) have self-employment</div>
<div class="t" style="left:373.6px;top:440.97px;font-size:8.58px;font-weight:400;color:#161616;">income, including as an independent contractor, use the estimator.</div>
<div class="t" style="left:292px;top:454.70px;font-size:8.5px;font-weight:400;color:#161616;"><b style="color:#000">Complete Steps 3–4(b) on Form W-4 for only ONE of these jobs.</b> Leave those steps blank for the other jobs. (Your withholding will</div>
<div class="t" style="left:292px;top:465.27px;font-size:8.58px;font-weight:400;color:#161616;">be most accurate if you complete Steps 3–4(b) on the Form W-4 for the highest paying job.)</div>
<div class="r" style="left:292px;top:475.05px;width:508px;height:6.5px;background:#000"></div>
<div class="t" style="left:292.2px;top:482.83px;font-size:9.3px;font-weight:700;color:#000;">Step 3:</div>
<div class="t" style="left:292.2px;top:496.93px;font-size:9.3px;font-weight:700;color:#000;">Claim</div>
<div class="t" style="left:292.2px;top:507.83px;font-size:9.3px;font-weight:700;color:#000;">Dependents</div>
<div class="t" style="left:373.6px;top:483.63px;font-size:8.45px;font-weight:400;color:#161616;">If your total income will be $200,000 or less ($400,000 or less if married filing jointly):</div>
<div class="t" style="left:387px;top:498.64px;font-size:8.22px;font-weight:400;color:#161616;">Multiply the number of qualifying children under age 17 by $2,000</div>
<svg class="r" style="left:627.5px;top:497.80px" width="5.40" height="6" viewBox="0 0 9 10"><path d="M0 0L9 5L0 10Z" fill="#000"/></svg>
<div class="t" style="left:638.4px;top:497.27px;font-size:8.58px;font-weight:400;color:#161616;">$</div>
<div class="r" style="left:644.7px;top:495.3px;width:60.3px;height:10.8px;background:#d5e5fb;border:0.6px solid #c5d8f5;box-sizing:border-box"></div>
<div class="r" style="left:637px;top:504.35px;width:68px;height:4.5px;background:#333"></div>
<div class="t" style="left:387px;top:515.16px;font-size:8.6px;font-weight:400;color:#161616;">Multiply the number of other dependents by $500</div>
<div class="t" style="left:585.4px;top:515.17px;font-size:8.58px;font-weight:400;color:#161616;">.</div>
<div class="t" style="left:596.6999999999999px;top:515.17px;font-size:8.58px;font-weight:400;color:#161616;">.</div>
<div class="t" style="left:608.0px;top:515.17px;font-size:8.58px;font-weight:400;color:#161616;">.</div>
<div class="t" style="left:619.3px;top:515.17px;font-size:8.58px;font-weight:400;color:#161616;">.</div>
<svg class="r" style="left:627.5px;top:514.60px" width="5.40" height="6" viewBox="0 0 9 10"><path d="M0 0L9 5L0 10Z" fill="#000"/></svg>
<div class="t" style="left:638.4px;top:514.17px;font-size:8.58px;font-weight:400;color:#161616;">$</div>
<div class="r" style="left:644.7px;top:512.4px;width:60.3px;height:11.1px;background:#d5e5fb;border:0.6px solid #c5d8f5;box-sizing:border-box"></div>
<div class="r" style="left:637px;top:521.55px;width:68px;height:4.5px;background:#333"></div>
<div class="t" style="left:373.6px;top:531.37px;font-size:8.58px;font-weight:400;color:#161616;">Add the amounts above and enter the total here</div>
<div class="t" style="left:563.4px;top:531.77px;font-size:8.58px;font-weight:400;color:#161616;">.</div>
<div class="t" style="left:574.68px;top:531.77px;font-size:8.58px;font-weight:400;color:#161616;">.</div>
<div class="t" style="left:585.9599999999999px;top:531.77px;font-size:8.58px;font-weight:400;color:#161616;">.</div>
<div class="t" style="left:597.24px;top:531.77px;font-size:8.58px;font-weight:400;color:#161616;">.</div>
<div class="t" style="left:608.52px;top:531.77px;font-size:8.58px;font-weight:400;color:#161616;">.</div>
<div class="t" style="left:619.8px;top:531.77px;font-size:8.58px;font-weight:400;color:#161616;">.</div>
<div class="t" style="left:631.0799999999999px;top:531.77px;font-size:8.58px;font-weight:400;color:#161616;">.</div>
<div class="t" style="left:642.36px;top:531.77px;font-size:8.58px;font-weight:400;color:#161616;">.</div>
<div class="t" style="left:653.64px;top:531.77px;font-size:8.58px;font-weight:400;color:#161616;">.</div>
<div class="t" style="left:664.92px;top:531.77px;font-size:8.58px;font-weight:400;color:#161616;">.</div>
<div class="t" style="left:676.1999999999999px;top:531.77px;font-size:8.58px;font-weight:400;color:#161616;">.</div>
<div class="t" style="left:687.48px;top:531.77px;font-size:8.58px;font-weight:400;color:#161616;">.</div>
<div class="t" style="left:698.76px;top:531.77px;font-size:8.58px;font-weight:400;color:#161616;">.</div>
<div class="t" style="left:719.7px;top:530.70px;font-size:8.3px;font-weight:700;color:#000;">3</div>
<div class="t" style="left:733.2px;top:530.57px;font-size:8.58px;font-weight:400;color:#161616;">$</div>
<div class="r" style="left:739.5px;top:529.2px;width:60.3px;height:11.2px;background:#d5e5fb;border:0.6px solid #c5d8f5;box-sizing:border-box"></div>
<div class="r" style="left:709.05px;top:478.3px;width:5.5px;height:76.69999999999999px;background:#000"></div>
<div class="r" style="left:729.35px;top:478.3px;width:5.5px;height:76.69999999999999px;background:#000"></div>
<div class="r" style="left:292px;top:537.35px;width:508px;height:6.5px;background:#000"></div>
<div class="t" style="left:292.2px;top:544.73px;font-size:9.3px;font-weight:700;color:#000;">Step 4</div>
<div class="t" style="left:373.6px;top:544.5px;width:331.5px;font-size:8.5px;color:#333;white-space:normal;text-align:justify;text-align-last:justify;height:9px;overflow:hidden"><b>(a) Other income (not from jobs).</b> If you want tax withheld for other income you</div>
<div class="t" style="left:292.2px;top:555.63px;font-size:9.3px;font-weight:700;color:#000;">(optional):</div>
<div class="t" style="left:292.2px;top:566.63px;font-size:9.3px;font-weight:700;color:#000;">Other</div>
<div class="t" style="left:292.2px;top:577.63px;font-size:9.3px;font-weight:700;color:#000;">Adjustments</div>
<div class="t" style="left:373.6px;top:555.57px;font-size:8.58px;font-weight:400;color:#161616;">income that will not be withheld, include the amount of other income here. This may</div>
<div class="t" style="left:373.6px;top:566.17px;font-size:8.58px;font-weight:400;color:#161616;">income that will not be withheld, include the amount of other income here. This may</div>
<div class="t" style="left:373.6px;top:576.77px;font-size:8.58px;font-weight:400;color:#161616;">income that will not be withheld, include the amount of other income here. This may</div>
<div class="t" style="left:373.6px;top:587.97px;font-size:8.58px;font-weight:400;color:#161616;">(b) Deductions. If you expect to claim deductions other than the standard deduction</div>
<div class="t" style="left:373.6px;top:598.57px;font-size:8.58px;font-weight:400;color:#161616;">(b) Deductions. If you expect to claim deductions other than the standard deduction</div>
<div class="t" style="left:373.6px;top:609.17px;font-size:8.58px;font-weight:400;color:#161616;">(b) Deductions. If you expect to claim deductions other than the standard deduction</div>
<div class="t" style="left:373.6px;top:621.97px;font-size:8.58px;font-weight:400;color:#161616;">(c) Extra withholding. Enter any additional tax you want withheld each pay period</div>
<div class="t" style="left:715px;top:557.10px;font-size:8.3px;font-weight:700;color:#000;">4(a)</div>
<div class="r" style="left:739.5px;top:555px;width:60.3px;height:11px;background:#d5e5fb"></div>
<div class="r" style="left:732px;top:563.5px;width:68px;height:5.0px;background:#333"></div>
<div class="t" style="left:715px;top:598.10px;font-size:8.3px;font-weight:700;color:#000;">4(b)</div>
<div class="r" style="left:739.5px;top:596px;width:60.3px;height:11px;background:#d5e5fb"></div>
<div class="r" style="left:732px;top:604.5px;width:68px;height:5.0px;background:#333"></div>
<div class="t" style="left:715px;top:620.10px;font-size:8.3px;font-weight:700;color:#000;">4(c)</div>
<div class="r" style="left:739.5px;top:618px;width:60.3px;height:11px;background:#d5e5fb"></div>
<div class="r" style="left:732px;top:626.5px;width:68px;height:5.0px;background:#333"></div>
<div class="r" style="left:709.05px;top:540px;width:5.5px;height:110px;background:#000"></div>
<div class="r" style="left:729.35px;top:540px;width:5.5px;height:110px;background:#000"></div>
<div class="r" style="left:292px;top:646.75px;width:508px;height:6.5px;background:#000"></div>
<div class="t" style="left:292.2px;top:657.63px;font-size:9.3px;font-weight:700;color:#000;">Step 5:</div>
<div class="t" style="left:292.2px;top:668.63px;font-size:9.3px;font-weight:700;color:#000;">Sign</div>
<div class="t" style="left:292.2px;top:679.63px;font-size:9.3px;font-weight:700;color:#000;">Here</div>
<div class="t" style="left:373.6px;top:658.57px;font-size:7.3px;font-weight:400;color:#161616;">Under penalties of perjury, I declare that this certificate, to the best of my knowledge and belief, is true, correct, and complete.</div>
<div class="r" style="left:373.6px;top:677.5px;width:306.4px;height:5.0px;background:#000"></div>
<div class="r" style="left:690px;top:677.5px;width:110px;height:5.0px;background:#000"></div>
<div class="t" style="left:380px;top:682.71px;font-size:7px;font-weight:700;color:#000;">Employee’s signature (This form is not valid unless you sign it.)</div>
<div class="t" style="left:700px;top:682.71px;font-size:7px;font-weight:700;color:#000;">Date</div>
<svg class="r" style="left:360px;top:672.00px" width="7.20" height="8" viewBox="0 0 9 10"><path d="M0 0L9 5L0 10Z" fill="#000"/></svg>
<div class="r" style="left:292px;top:687.25px;width:508px;height:6.5px;background:#000"></div>
<div class="t" style="left:292.2px;top:697.63px;font-size:9.3px;font-weight:700;color:#000;">Employers</div>
<div class="t" style="left:292.2px;top:708.63px;font-size:9.3px;font-weight:700;color:#000;">Only</div>
<div class="t" style="left:373.6px;top:692.95px;font-size:6.5px;font-weight:400;color:#161616;">Employer’s name and address</div>
<div class="t" style="left:628px;top:692.95px;font-size:6.5px;font-weight:400;color:#161616;">First date of</div>
<div class="t" style="left:628px;top:699.95px;font-size:6.5px;font-weight:400;color:#161616;">employment</div>
<div class="t" style="left:703px;top:692.95px;font-size:6.5px;font-weight:400;color:#161616;">Employer identification</div>
<div class="t" style="left:703px;top:699.95px;font-size:6.5px;font-weight:400;color:#161616;">number (EIN)</div>
<div class="r" style="left:367.25px;top:690px;width:5.5px;height:60px;background:#000"></div>
<div class="r" style="left:621.25px;top:690px;width:5.5px;height:60px;background:#000"></div>
<div class="r" style="left:696.25px;top:690px;width:5.5px;height:60px;background:#000"></div>
<div class="r" style="left:292px;top:746.75px;width:508px;height:6.5px;background:#000"></div>
<div class="t" style="left:292px;top:756.95px;font-size:6.5px;font-weight:400;color:#161616;"><b>For Privacy Act and Paperwork Reduction Act Notice, see page 3.</b></div>
<div class="t" style="left:560px;top:756.95px;font-size:6.5px;font-weight:400;color:#161616;">Cat. No. 10220Q</div>
<div class="t" style="left:745px;top:756.95px;font-size:6.5px;font-weight:400;color:#161616;">Form <b>W-4</b> (2022)</div></div></div>
<div class="r" style="left:-10px;top:189.5px;width:44px;height:102.5px;border:1px solid #5b9cf6;border-radius:2px;box-sizing:border-box"></div>
<div class="r" style="left:0px;top:554.5px;width:930px;height:66px;background:#f6f7f9"></div>
<div class="r" style="left:0px;top:554.5px;width:930px;height:1.0px;background:#fbfbfc"></div>
<svg class="r" style="left:0;top:555px" width="130" height="65" viewBox="0 555 130 65"><path d="M0 555H75L96.5 577C104 586 112 598 123 620H0Z" fill="#1dc15d"/><path d="M89.6 620L90.6 617.6L92 620Z" fill="#e8f7ee"/></svg>
</body></html>
